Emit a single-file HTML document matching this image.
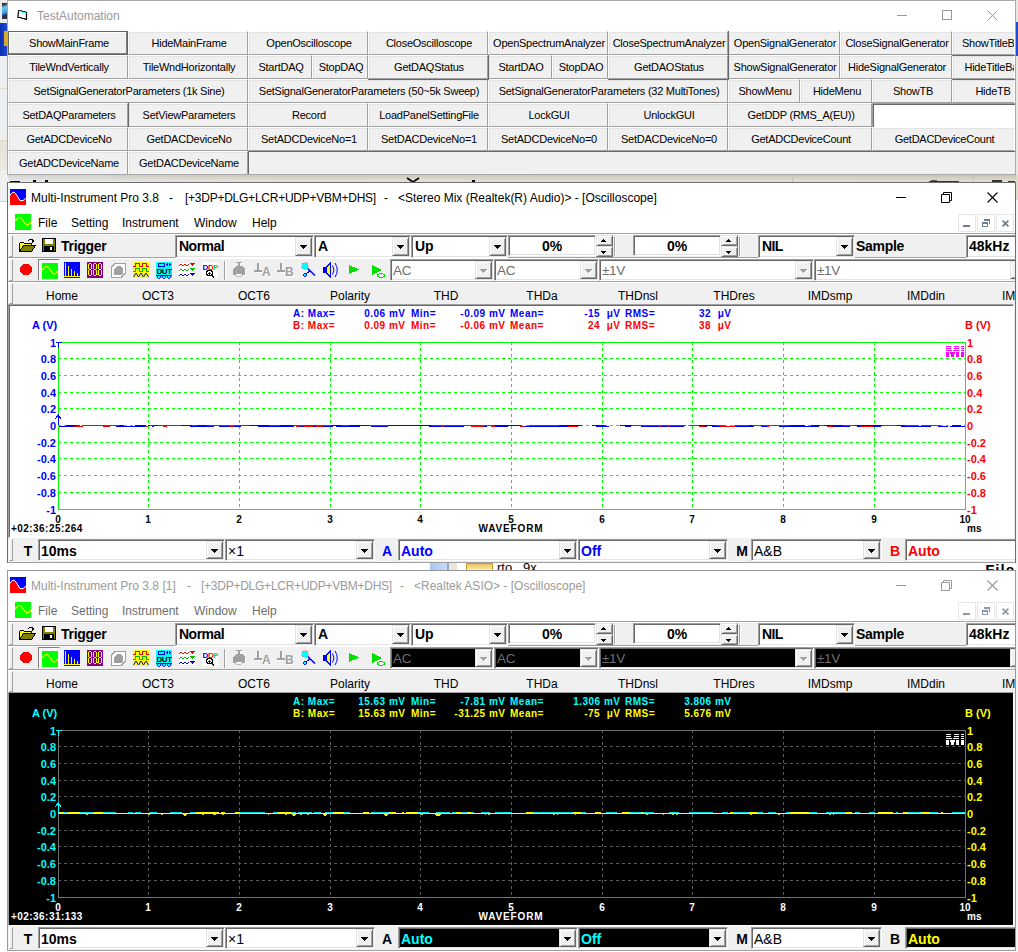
<!DOCTYPE html><html><head><meta charset="utf-8"><style>
*{margin:0;padding:0;box-sizing:border-box}
html,body{width:1018px;height:952px;overflow:hidden;background:#fff;position:relative;font-family:"Liberation Sans",sans-serif}
div{position:absolute}
.t{white-space:pre;overflow:hidden}
.btn{background:#f0f0f0;border-top:1px solid #fff;border-left:1px solid #fff;border-right:1px solid #a0a0a0;border-bottom:1px solid #a0a0a0;box-shadow:inset 1px 1px 0 #e3e3e3}
.bt{font-size:11px;letter-spacing:-0.25px;color:#000;text-align:center}
.sunk{border-top:1px solid #a0a0a0;border-left:1px solid #a0a0a0;border-right:1px solid #fff;border-bottom:1px solid #fff;box-shadow:inset 1px 1px 0 #696969, inset -1px -1px 0 #e3e3e3}
.dd{background:#f0f0f0;border-top:1px solid #e3e3e3;border-left:1px solid #e3e3e3;border-right:1px solid #696969;border-bottom:1px solid #696969;box-shadow:inset 1px 1px 0 #fff, inset -1px -1px 0 #a0a0a0}
svg{position:absolute;overflow:visible}
</style></head><body><div style="left:0px;top:0px;width:1018px;height:952px;background:#fff"></div>
<div style="left:0px;top:0px;width:8px;height:175px;background:#e9e9ea"></div>
<div style="left:2px;top:3px;width:5px;height:16px;background:linear-gradient(160deg,#2a2f3a 10%,#7cc7f0 30%,#3c9be6 60%,#2b3140 75%)"></div>
<div style="left:0px;top:23px;width:8px;height:33px;background:linear-gradient(90deg,#0a30b0,#1a4fd8)"></div>
<div style="left:4px;top:31px;width:4px;height:15px;background:#d8a830"></div>
<div style="left:0px;top:56px;width:8px;height:119px;background:#eceef0"></div>
<div style="left:0px;top:88px;width:7px;height:1px;background:#e0dccb"></div>
<div style="left:0px;top:140px;width:7px;height:1px;background:#dcd8c4"></div>
<div style="left:0px;top:141px;width:7px;height:30px;background:linear-gradient(#e4e2d8,#eceae2)"></div>
<div style="left:0px;top:175px;width:1018px;height:8px;background:linear-gradient(rgba(0,0,0,0.10),rgba(255,255,255,0.25)),linear-gradient(90deg,#ebebeb 0,#e2e0d4 200px,#dedbc9 100%)"></div>
<div style="left:0px;top:175px;width:8px;height:26px;background:#eef0f2"></div>
<div style="left:10px;top:181px;width:10px;height:1px;background:#000"></div>
<div style="left:33px;top:180px;width:3px;height:2px;background:#000"></div>
<div style="left:45px;top:180px;width:3px;height:2px;background:#000"></div>
<svg style="left:406px;top:178px" width="14" height="5"><path d="M1 0L7 4L13 0" fill="none" stroke="#000" stroke-width="1.6"/></svg>
<div style="left:472px;top:180px;width:3px;height:2px;background:#000"></div>
<div style="left:792px;top:176px;width:1px;height:6px;background:#c8c6b8"></div>
<div style="left:973px;top:176px;width:1px;height:6px;background:#c8c6b8"></div>
<div style="left:929px;top:181px;width:30px;height:1px;background:#333"></div>
<div style="left:931px;top:180px;width:6px;height:1px;background:#555"></div>
<div style="left:992px;top:180px;width:10px;height:2px;background:#333"></div>
<div style="left:1008px;top:181px;width:7px;height:1px;background:#333"></div>
<div style="left:0px;top:201px;width:8px;height:1px;background:#d0d0c8"></div>
<div style="left:1016px;top:0px;width:2px;height:952px;background:#e8e8e0"></div>
<div style="left:1016px;top:22px;width:2px;height:34px;background:#1a50d0"></div>
<div style="left:0px;top:562px;width:1018px;height:9px;background:#fff"></div>
<div style="left:430px;top:563px;width:17px;height:7px;background:linear-gradient(90deg,#a8c4f0,#c8dcf8)"></div>
<div style="left:447px;top:563px;width:2px;height:7px;background:#8aa8d8"></div>
<div style="left:449px;top:563px;width:8px;height:7px;background:#e8e6d8"></div>
<div style="left:466px;top:563px;width:27px;height:7px;background:linear-gradient(#e8c060,#fff0a0);border-top:1px solid #c89830;border-left:1px solid #c89830;border-right:1px solid #c89830"></div>
<div class="t" style="left:497px;top:561px;width:80px;height:14px;line-height:14px;font-size:13px;color:#000;overflow:hidden">rto&nbsp;&nbsp; 9x</div>
<div class="t" style="left:943px;top:561px;width:72px;height:14px;line-height:18px;font-size:15px;font-weight:bold;color:#000;letter-spacing:1px;text-align:right">File</div>
<div style="left:7px;top:0px;width:1009px;height:175px;background:#fff;border:1px solid #aaa"></div>
<svg style="left:17px;top:9px" width="12" height="12" viewBox="0 0 12 12"><path d="M1.5 1.5h2.5l1 1h3l1 1h0.5v7h-1l-1-1h-2.5l-1-1h-3z" fill="#fff" stroke="#000" stroke-width="1.2"/><path d="M1.5 2.2h2.5l1 1h3l1 1" stroke="#0ff" stroke-width="1" fill="none"/></svg>
<div class="t" style="left:37px;top:7px;width:200px;height:18px;line-height:18px;text-align:left;font-size:12px;color:#999">TestAutomation</div>
<div style="left:897px;top:15px;width:10px;height:1px;background:#999"></div>
<div style="left:942px;top:10px;width:10px;height:10px;border:1px solid #999"></div>
<svg style="left:987px;top:10px" width="11" height="11"><path d="M0.5 0.5L10.5 10.5M10.5 0.5L0.5 10.5" stroke="#999" stroke-width="1"/></svg>
<div style="left:8px;top:31px;width:1006px;height:143px;overflow:hidden">
<div class="btn" style="left:0px;top:0px;width:120px;height:24px"></div>
<div class="t bt" style="left:1px;top:0px;width:120px;height:24px;line-height:24px">ShowMainFrame</div>
<div class="btn" style="left:120px;top:0px;width:120px;height:24px"></div>
<div class="t bt" style="left:121px;top:0px;width:120px;height:24px;line-height:24px">HideMainFrame</div>
<div class="btn" style="left:240px;top:0px;width:120px;height:24px"></div>
<div class="t bt" style="left:241px;top:0px;width:120px;height:24px;line-height:24px">OpenOscilloscope</div>
<div class="btn" style="left:360px;top:0px;width:120px;height:24px"></div>
<div class="t bt" style="left:361px;top:0px;width:120px;height:24px;line-height:24px">CloseOscilloscope</div>
<div class="btn" style="left:480px;top:0px;width:120px;height:24px"></div>
<div class="t bt" style="left:481px;top:0px;width:120px;height:24px;line-height:24px">OpenSpectrumAnalyzer</div>
<div class="btn" style="left:600px;top:0px;width:120px;height:24px"></div>
<div class="t bt" style="left:601px;top:0px;width:120px;height:24px;line-height:24px">CloseSpectrumAnalyzer</div>
<div class="btn" style="left:720px;top:0px;width:112px;height:24px"></div>
<div class="t bt" style="left:721px;top:0px;width:112px;height:24px;line-height:24px">OpenSignalGenerator</div>
<div class="btn" style="left:832px;top:0px;width:112px;height:24px"></div>
<div class="t bt" style="left:833px;top:0px;width:112px;height:24px;line-height:24px">CloseSignalGenerator</div>
<div class="btn" style="left:944px;top:0px;width:80px;height:24px"></div>
<div class="t bt" style="left:945px;top:0px;width:80px;height:24px;line-height:24px">ShowTitleBar</div>
<div class="btn" style="left:0px;top:24px;width:120px;height:24px"></div>
<div class="t bt" style="left:1px;top:24px;width:120px;height:24px;line-height:24px">TileWndVertically</div>
<div class="btn" style="left:120px;top:24px;width:120px;height:24px"></div>
<div class="t bt" style="left:121px;top:24px;width:120px;height:24px;line-height:24px">TileWndHorizontally</div>
<div class="btn" style="left:240px;top:24px;width:64px;height:24px"></div>
<div class="t bt" style="left:241px;top:24px;width:64px;height:24px;line-height:24px">StartDAQ</div>
<div class="btn" style="left:304px;top:24px;width:56px;height:24px"></div>
<div class="t bt" style="left:305px;top:24px;width:56px;height:24px;line-height:24px">StopDAQ</div>
<div class="btn" style="left:360px;top:24px;width:120px;height:24px"></div>
<div class="t bt" style="left:361px;top:24px;width:120px;height:24px;line-height:24px">GetDAQStatus</div>
<div class="btn" style="left:480px;top:24px;width:64px;height:24px"></div>
<div class="t bt" style="left:481px;top:24px;width:64px;height:24px;line-height:24px">StartDAO</div>
<div class="btn" style="left:544px;top:24px;width:56px;height:24px"></div>
<div class="t bt" style="left:545px;top:24px;width:56px;height:24px;line-height:24px">StopDAO</div>
<div class="btn" style="left:600px;top:24px;width:120px;height:24px"></div>
<div class="t bt" style="left:601px;top:24px;width:120px;height:24px;line-height:24px">GetDAOStatus</div>
<div class="btn" style="left:720px;top:24px;width:112px;height:24px"></div>
<div class="t bt" style="left:721px;top:24px;width:112px;height:24px;line-height:24px">ShowSignalGenerator</div>
<div class="btn" style="left:832px;top:24px;width:112px;height:24px"></div>
<div class="t bt" style="left:833px;top:24px;width:112px;height:24px;line-height:24px">HideSignalGenerator</div>
<div class="btn" style="left:944px;top:24px;width:80px;height:24px"></div>
<div class="t bt" style="left:945px;top:24px;width:80px;height:24px;line-height:24px">HideTitleBar</div>
<div class="btn" style="left:0px;top:48px;width:240px;height:24px"></div>
<div class="t bt" style="left:1px;top:48px;width:240px;height:24px;line-height:24px">SetSignalGeneratorParameters (1k Sine)</div>
<div class="btn" style="left:240px;top:48px;width:240px;height:24px"></div>
<div class="t bt" style="left:241px;top:48px;width:240px;height:24px;line-height:24px">SetSignalGeneratorParameters (50~5k Sweep)</div>
<div class="btn" style="left:480px;top:48px;width:240px;height:24px"></div>
<div class="t bt" style="left:481px;top:48px;width:240px;height:24px;line-height:24px">SetSignalGeneratorParameters (32 MultiTones)</div>
<div class="btn" style="left:720px;top:48px;width:72px;height:24px"></div>
<div class="t bt" style="left:721px;top:48px;width:72px;height:24px;line-height:24px">ShowMenu</div>
<div class="btn" style="left:792px;top:48px;width:72px;height:24px"></div>
<div class="t bt" style="left:793px;top:48px;width:72px;height:24px;line-height:24px">HideMenu</div>
<div class="btn" style="left:864px;top:48px;width:80px;height:24px"></div>
<div class="t bt" style="left:865px;top:48px;width:80px;height:24px;line-height:24px">ShowTB</div>
<div class="btn" style="left:944px;top:48px;width:80px;height:24px"></div>
<div class="t bt" style="left:945px;top:48px;width:80px;height:24px;line-height:24px">HideTB</div>
<div class="btn" style="left:0px;top:72px;width:120px;height:24px"></div>
<div class="t bt" style="left:1px;top:72px;width:120px;height:24px;line-height:24px">SetDAQParameters</div>
<div class="btn" style="left:120px;top:72px;width:120px;height:24px"></div>
<div class="t bt" style="left:121px;top:72px;width:120px;height:24px;line-height:24px">SetViewParameters</div>
<div class="btn" style="left:240px;top:72px;width:120px;height:24px"></div>
<div class="t bt" style="left:241px;top:72px;width:120px;height:24px;line-height:24px">Record</div>
<div class="btn" style="left:360px;top:72px;width:120px;height:24px"></div>
<div class="t bt" style="left:361px;top:72px;width:120px;height:24px;line-height:24px">LoadPanelSettingFile</div>
<div class="btn" style="left:480px;top:72px;width:120px;height:24px"></div>
<div class="t bt" style="left:481px;top:72px;width:120px;height:24px;line-height:24px">LockGUI</div>
<div class="btn" style="left:600px;top:72px;width:120px;height:24px"></div>
<div class="t bt" style="left:601px;top:72px;width:120px;height:24px;line-height:24px">UnlockGUI</div>
<div class="btn" style="left:720px;top:72px;width:144px;height:24px"></div>
<div class="t bt" style="left:721px;top:72px;width:144px;height:24px;line-height:24px">GetDDP (RMS_A(EU))</div>
<div class="btn" style="left:0px;top:96px;width:120px;height:24px"></div>
<div class="t bt" style="left:1px;top:96px;width:120px;height:24px;line-height:24px">GetADCDeviceNo</div>
<div class="btn" style="left:120px;top:96px;width:120px;height:24px"></div>
<div class="t bt" style="left:121px;top:96px;width:120px;height:24px;line-height:24px">GetDACDeviceNo</div>
<div class="btn" style="left:240px;top:96px;width:120px;height:24px"></div>
<div class="t bt" style="left:241px;top:96px;width:120px;height:24px;line-height:24px">SetADCDeviceNo=1</div>
<div class="btn" style="left:360px;top:96px;width:120px;height:24px"></div>
<div class="t bt" style="left:361px;top:96px;width:120px;height:24px;line-height:24px">SetDACDeviceNo=1</div>
<div class="btn" style="left:480px;top:96px;width:120px;height:24px"></div>
<div class="t bt" style="left:481px;top:96px;width:120px;height:24px;line-height:24px">SetADCDeviceNo=0</div>
<div class="btn" style="left:600px;top:96px;width:120px;height:24px"></div>
<div class="t bt" style="left:601px;top:96px;width:120px;height:24px;line-height:24px">SetDACDeviceNo=0</div>
<div class="btn" style="left:720px;top:96px;width:144px;height:24px"></div>
<div class="t bt" style="left:721px;top:96px;width:144px;height:24px;line-height:24px">GetADCDeviceCount</div>
<div class="btn" style="left:864px;top:96px;width:143px;height:24px"></div>
<div class="t bt" style="left:865px;top:96px;width:143px;height:24px;line-height:24px">GetDACDeviceCount</div>
<div class="btn" style="left:0px;top:120px;width:120px;height:24px"></div>
<div class="t bt" style="left:1px;top:120px;width:120px;height:24px;line-height:24px">GetADCDeviceName</div>
<div class="btn" style="left:120px;top:120px;width:120px;height:24px"></div>
<div class="t bt" style="left:121px;top:120px;width:120px;height:24px;line-height:24px">GetDACDeviceName</div>
</div>
<div style="left:8px;top:31px;width:120px;height:24px;border:1px solid #646464;box-shadow:inset -1px -1px 0 #808080, inset 1px 1px 0 #fff"></div>
<div style="left:488px;top:55px;width:1px;height:25px;background:#696969"></div>
<div style="left:368px;top:79px;width:121px;height:1px;background:#696969"></div>
<div style="left:728px;top:31px;width:1px;height:49px;background:#696969"></div>
<div style="left:608px;top:79px;width:121px;height:1px;background:#696969"></div>
<div style="left:952px;top:55px;width:63px;height:1px;background:#696969"></div>
<div style="left:952px;top:79px;width:63px;height:1px;background:#696969"></div>
<div style="left:128px;top:103px;width:1px;height:24px;background:#696969"></div>
<div style="left:872px;top:103px;width:143px;height:24px;background:#fff;border-top:1px solid #a0a0a0;border-left:1px solid #a0a0a0;box-shadow:inset 1px 1px 0 #696969"></div>
<div style="left:248px;top:151px;width:767px;height:23px;background:#f0f0f0;border-top:1px solid #696969;border-left:1px solid #696969"></div>
<div style="left:7px;top:182px;width:1009px;height:381px;background:#f0f0f0;border:1px solid #6e6e6e"></div>
<div style="left:8px;top:183px;width:1007px;height:31px;background:#fff"></div>
<svg style="left:10px;top:189px" width="16" height="16" viewBox="0 0 16 16"><rect width="16" height="16" fill="#0000ff"/><path d="M0 16V6.5Q3 1 5.5 4.5T10 11.5Q13 13 16 9V16Z" fill="#ff0000"/><path d="M0 6.5Q3 1 5.5 4.5T10 11.5Q13 13 16 9" fill="none" stroke="#fff" stroke-width="1"/></svg>
<div class="t" style="left:31px;top:188px;width:200px;height:20px;line-height:20px;text-align:left;font-size:12px;color:#000">Multi-Instrument Pro 3.8</div>
<div class="t" style="left:169px;top:188px;width:10px;height:20px;line-height:20px;text-align:left;font-size:12px;color:#000">-</div>
<div class="t" style="left:185px;top:188px;width:200px;height:20px;line-height:20px;text-align:left;font-size:12px;letter-spacing:-0.25px;color:#000">[+3DP+DLG+LCR+UDP+VBM+DHS]</div>
<div class="t" style="left:384px;top:188px;width:10px;height:20px;line-height:20px;text-align:left;font-size:12px;color:#000">-</div>
<div class="t" style="left:398px;top:188px;width:300px;height:20px;line-height:20px;text-align:left;font-size:12px;color:#000">&lt;Stereo Mix (Realtek(R) Audio)&gt; - [Oscilloscope]</div>
<div style="left:896px;top:197px;width:10px;height:1px;background:#000"></div>
<svg style="left:941px;top:192px" width="11" height="11"><path d="M2.5 2.5V0.5H10.5V8.5H8.5M0.5 2.5H8.5V10.5H0.5Z" fill="none" stroke="#000" stroke-width="1"/></svg>
<svg style="left:987px;top:192px" width="11" height="11"><path d="M0.5 0.5L10.5 10.5M10.5 0.5L0.5 10.5" stroke="#000" stroke-width="1.1"/></svg>
<div style="left:8px;top:214px;width:1007px;height:19px;background:#fff"></div>
<svg style="left:15px;top:214px" width="16" height="16" viewBox="0 0 16 16"><rect width="16" height="16" fill="#00ff00"/><path d="M0 7L2 5L3.5 3.5H5.5L7 5L9 8L10.5 10L11.5 11H13L14.5 9.5L16 8" fill="none" stroke="#ffff00" stroke-width="1.1"/></svg>
<div class="t" style="left:38px;top:214px;width:80px;height:18px;line-height:18px;text-align:left;font-size:12px;color:#000">File</div>
<div class="t" style="left:71px;top:214px;width:80px;height:18px;line-height:18px;text-align:left;font-size:12px;color:#000">Setting</div>
<div class="t" style="left:122px;top:214px;width:80px;height:18px;line-height:18px;text-align:left;font-size:12px;color:#000">Instrument</div>
<div class="t" style="left:194px;top:214px;width:80px;height:18px;line-height:18px;text-align:left;font-size:12px;color:#000">Window</div>
<div class="t" style="left:252px;top:214px;width:80px;height:18px;line-height:18px;text-align:left;font-size:12px;color:#000">Help</div>
<div style="left:958px;top:214px;width:18px;height:18px;border:1px solid #e6e6e6;background:#fff"></div>
<div style="left:977px;top:214px;width:18px;height:18px;border:1px solid #e6e6e6;background:#fff"></div>
<div style="left:996px;top:214px;width:18px;height:18px;border:1px solid #e6e6e6;background:#fff"></div>
<div style="left:963px;top:225px;width:7px;height:2px;background:#6d7d8e"></div>
<div style="left:984px;top:219px;width:6px;height:2px;background:#6d7d8e"></div>
<div style="left:989px;top:219px;width:1px;height:5px;background:#6d7d8e"></div>
<div style="left:982px;top:222px;width:6px;height:2px;background:#6d7d8e"></div>
<div style="left:982px;top:222px;width:1px;height:5px;background:#6d7d8e"></div>
<div style="left:987px;top:222px;width:1px;height:5px;background:#6d7d8e"></div>
<div style="left:982px;top:226px;width:6px;height:1px;background:#6d7d8e"></div>
<svg style="left:1002px;top:220px" width="7" height="7"><path d="M0.6 0.6L6.4 6.4M6.4 0.6L0.6 6.4" stroke="#6d7d8e" stroke-width="1.7"/></svg>
<div style="left:8px;top:233px;width:1007px;height:1px;background:#a0a0a0"></div>
<div style="left:8px;top:234px;width:1007px;height:1px;background:#fff"></div>
<div style="left:9px;top:235px;width:4px;height:22px;border-left:1px solid #fff;border-top:1px solid #fff;border-right:1px solid #a0a0a0;border-bottom:1px solid #a0a0a0"></div>
<div style="left:8px;top:257px;width:1007px;height:1px;background:#a0a0a0"></div>
<div style="left:8px;top:258px;width:1007px;height:1px;background:#fff"></div>
<div class="t" style="left:61px;top:236px;width:60px;height:20px;line-height:20px;text-align:left;font-size:14px;font-weight:bold;letter-spacing:-0.3px">Trigger</div>
<div class="sunk" style="left:175px;top:235px;width:139px;height:23px;background:#fff"></div>
<div class="t" style="left:179px;top:236px;width:116px;height:21px;line-height:21px;text-align:left;font-size:14px;font-weight:bold;letter-spacing:-0.5px">Normal</div>
<div class="dd" style="left:295px;top:237px;width:17px;height:19px"></div>
<div style="left:300px;top:245px;width:7px;height:1px;background:#000"></div><div style="left:301px;top:246px;width:5px;height:1px;background:#000"></div><div style="left:302px;top:247px;width:3px;height:1px;background:#000"></div><div style="left:303px;top:248px;width:1px;height:1px;background:#000"></div>
<div class="sunk" style="left:314px;top:235px;width:97px;height:23px;background:#fff"></div>
<div class="t" style="left:318px;top:236px;width:74px;height:21px;line-height:21px;text-align:left;font-size:14px;font-weight:bold">A</div>
<div class="dd" style="left:392px;top:237px;width:17px;height:19px"></div>
<div style="left:397px;top:245px;width:7px;height:1px;background:#000"></div><div style="left:398px;top:246px;width:5px;height:1px;background:#000"></div><div style="left:399px;top:247px;width:3px;height:1px;background:#000"></div><div style="left:400px;top:248px;width:1px;height:1px;background:#000"></div>
<div class="sunk" style="left:411px;top:235px;width:97px;height:23px;background:#fff"></div>
<div class="t" style="left:415px;top:236px;width:74px;height:21px;line-height:21px;text-align:left;font-size:14px;font-weight:bold">Up</div>
<div class="dd" style="left:489px;top:237px;width:17px;height:19px"></div>
<div style="left:494px;top:245px;width:7px;height:1px;background:#000"></div><div style="left:495px;top:246px;width:5px;height:1px;background:#000"></div><div style="left:496px;top:247px;width:3px;height:1px;background:#000"></div><div style="left:497px;top:248px;width:1px;height:1px;background:#000"></div>
<div class="sunk" style="left:508px;top:235px;width:88px;height:21px;background:#fff"></div>
<div class="t" style="left:510px;top:236px;width:84px;height:20px;line-height:20px;text-align:center;font-size:14px;font-weight:bold">0%</div>
<div class="dd" style="left:596px;top:235px;width:17px;height:11px"></div>
<div class="dd" style="left:596px;top:246px;width:17px;height:11px"></div>
<div style="left:603px;top:239px;width:1px;height:1px;background:#000"></div><div style="left:602px;top:240px;width:3px;height:1px;background:#000"></div><div style="left:601px;top:241px;width:5px;height:1px;background:#000"></div>
<div style="left:601px;top:251px;width:5px;height:1px;background:#000"></div><div style="left:602px;top:252px;width:3px;height:1px;background:#000"></div><div style="left:603px;top:253px;width:1px;height:1px;background:#000"></div>
<div style="left:614px;top:237px;width:2px;height:19px;border-left:1px solid #a0a0a0;border-right:1px solid #fff"></div>
<div class="sunk" style="left:633px;top:235px;width:88px;height:21px;background:#fff"></div>
<div class="t" style="left:635px;top:236px;width:84px;height:20px;line-height:20px;text-align:center;font-size:14px;font-weight:bold">0%</div>
<div class="dd" style="left:721px;top:235px;width:17px;height:11px"></div>
<div class="dd" style="left:721px;top:246px;width:17px;height:11px"></div>
<div style="left:728px;top:239px;width:1px;height:1px;background:#000"></div><div style="left:727px;top:240px;width:3px;height:1px;background:#000"></div><div style="left:726px;top:241px;width:5px;height:1px;background:#000"></div>
<div style="left:726px;top:251px;width:5px;height:1px;background:#000"></div><div style="left:727px;top:252px;width:3px;height:1px;background:#000"></div><div style="left:728px;top:253px;width:1px;height:1px;background:#000"></div>
<div style="left:739px;top:237px;width:2px;height:19px;border-left:1px solid #a0a0a0;border-right:1px solid #fff"></div>
<div class="sunk" style="left:758px;top:235px;width:97px;height:23px;background:#fff"></div>
<div class="t" style="left:762px;top:236px;width:74px;height:21px;line-height:21px;text-align:left;font-size:14px;font-weight:bold;letter-spacing:-0.6px">NIL</div>
<div class="dd" style="left:836px;top:237px;width:17px;height:19px"></div>
<div style="left:841px;top:245px;width:7px;height:1px;background:#000"></div><div style="left:842px;top:246px;width:5px;height:1px;background:#000"></div><div style="left:843px;top:247px;width:3px;height:1px;background:#000"></div><div style="left:844px;top:248px;width:1px;height:1px;background:#000"></div>
<div class="t" style="left:856px;top:236px;width:60px;height:20px;line-height:20px;text-align:left;font-size:14px;font-weight:bold;letter-spacing:-0.3px">Sample</div>
<div class="sunk" style="left:966px;top:235px;width:54px;height:23px;background:#fff"></div>
<div class="t" style="left:969px;top:236px;width:47px;height:21px;line-height:21px;text-align:left;font-size:14px;font-weight:bold">48kHz</div>
<div style="left:9px;top:259px;width:4px;height:22px;border-left:1px solid #fff;border-top:1px solid #fff;border-right:1px solid #a0a0a0;border-bottom:1px solid #a0a0a0"></div>
<div style="left:8px;top:281px;width:1007px;height:1px;background:#a0a0a0"></div>
<div style="left:8px;top:282px;width:1007px;height:1px;background:#fff"></div>
<svg style="left:20px;top:264px" width="12" height="11" viewBox="0 0 12 11" shape-rendering="crispEdges"><path d="M3.5 0H8.5L12 3.5V7.5L8.5 11H3.5L0 7.5V3.5Z" fill="#ff0000"/></svg>
<div style="left:38px;top:259px;width:22px;height:22px;border-top:1px solid #808080;border-left:1px solid #808080;border-right:1px solid #fff;border-bottom:1px solid #fff;background:repeating-conic-gradient(#fff 0 25%,#f0f0f0 0 50%) 0 0/2px 2px"></div>
<svg style="left:42px;top:263px" width="16" height="16" viewBox="0 0 16 16" shape-rendering="crispEdges"><rect width="16" height="16" fill="#00ff00"/><path d="M0 7L2 5L3.5 3.5H5.5L7 5L9 8L10.5 10L11.5 11H13L14.5 9.5L16 8" fill="none" stroke="#ffff00" stroke-width="1.1" shape-rendering="auto"/></svg>
<svg style="left:64px;top:262px" width="16" height="16" viewBox="0 0 16 16" shape-rendering="crispEdges"><rect width="16" height="16" fill="#0000ff"/><path d="M1.5 1V14M4.5 4V14M7.5 7V14M10.5 9V14M13.5 11V14" stroke="#ffff00" stroke-width="1"/><rect x="0" y="14" width="16" height="1" fill="#ffff00"/></svg>
<svg style="left:87px;top:262px" width="16" height="16" viewBox="0 0 16 16" shape-rendering="crispEdges"><rect width="16" height="16" fill="#800080"/><g fill="#ffff00"><rect x="2" y="1" width="2" height="1"/><rect x="1" y="2" width="1" height="5"/><rect x="4" y="2" width="1" height="5"/><rect x="2" y="7" width="2" height="1"/><rect x="1" y="8" width="1" height="5"/><rect x="4" y="8" width="1" height="5"/><rect x="2" y="13" width="2" height="1"/><rect x="7" y="1" width="2" height="1"/><rect x="6" y="2" width="1" height="5"/><rect x="9" y="2" width="1" height="5"/><rect x="7" y="7" width="2" height="1"/><rect x="6" y="8" width="1" height="5"/><rect x="9" y="8" width="1" height="5"/><rect x="7" y="13" width="2" height="1"/><rect x="12" y="1" width="2" height="1"/><rect x="11" y="2" width="1" height="5"/><rect x="14" y="2" width="1" height="5"/><rect x="12" y="7" width="2" height="1"/><rect x="11" y="8" width="1" height="5"/><rect x="14" y="8" width="1" height="5"/><rect x="12" y="13" width="2" height="1"/><rect x="10" y="12" width="1" height="1"/></g></svg>
<svg style="left:111px;top:263px" width="15" height="15" viewBox="0 0 15 15" shape-rendering="crispEdges"><path d="M4 0.5H14.5V10L10 14.5H0.5V4Z" fill="#fff" stroke="#a0a0a0" stroke-width="1"/><path d="M6 3H9L12 6V10L10 12H3V6Z" fill="#a0a0a0"/></svg>
<svg style="left:133px;top:262px" width="16" height="16" viewBox="0 0 16 16" shape-rendering="crispEdges"><rect width="16" height="16" fill="#ffff00"/><path d="M0 4.5H2.5V1.5H6.5V4.5H9.5V1.5H13.5V4.5H16" fill="none" stroke="#ff0000"/><path d="M0 9.5H2.5V6.5H6.5V9.5H9.5V6.5H13.5V9.5H16" fill="none" stroke="#00c000"/><path d="M0.5 15L3 11L5.5 15L8 11L10.5 15L13 11L15.5 15" fill="none" stroke="#0000ff" shape-rendering="auto"/></svg>
<svg style="left:156px;top:262px" width="16" height="16" viewBox="0 0 16 16" shape-rendering="crispEdges"><rect width="16" height="16" fill="#00ffff"/><rect x="2" y="1" width="6" height="3" fill="none" stroke="#0000ff"/><path d="M10 2.5L12 1V4ZM15 2.5L13 1V4Z" fill="#0000ff"/><text x="8" y="11.5" font-family="Liberation Sans" font-weight="bold" font-size="8" text-anchor="middle" letter-spacing="-0.4" fill="#000">DUT</text><path d="M0 13.5H16" stroke="#0000ff"/><circle cx="3" cy="15" r="1.2" fill="none" stroke="#0000ff" stroke-width="0.8"/><circle cx="8" cy="15" r="1.2" fill="none" stroke="#0000ff" stroke-width="0.8"/><circle cx="13" cy="15" r="1.2" fill="none" stroke="#0000ff" stroke-width="0.8"/></svg>
<svg style="left:179px;top:263px" width="16" height="14" viewBox="0 0 16 14" shape-rendering="crispEdges"><rect width="16" height="14" fill="#fff"/><path d="M0 3L2 1L4 3L6 1L8 3L10 1" fill="none" stroke="#ff0000" shape-rendering="auto"/><path d="M10 0H16L13 3Z" fill="#ff0000"/><path d="M0 8L2 6L4 8L6 6L8 8L10 6" fill="none" stroke="#00c000" shape-rendering="auto"/><path d="M10 5H16L13 8Z" fill="#00c000"/><path d="M0 13L2 11L4 13L6 11L8 13L10 11" fill="none" stroke="#0000ff" shape-rendering="auto"/><path d="M10 10H16L13 13Z" fill="#0000ff"/></svg>
<svg style="left:202px;top:262px" width="16" height="16" viewBox="0 0 16 16" shape-rendering="crispEdges"><rect width="16" height="16" fill="#fff"/><text x="0.5" y="7.5" font-family="Liberation Sans" font-weight="bold" font-size="8" fill="#0000ff">D</text><text x="6" y="7.5" font-family="Liberation Sans" font-weight="bold" font-size="8" fill="#ff0000">D</text><text x="11" y="7.5" font-family="Liberation Sans" font-weight="bold" font-size="8" fill="#00e000">P</text><circle cx="7.5" cy="11" r="2.8" fill="none" stroke="#000" stroke-width="1.2"/><path d="M6 11H9M7.5 9.5V12.5" stroke="#000" stroke-width="0.8"/><path d="M9.5 13L12 15.5" stroke="#000" stroke-width="1.5"/></svg>
<div style="left:224px;top:261px;width:2px;height:19px;border-left:1px solid #a0a0a0;border-right:1px solid #fff"></div>
<svg style="left:233px;top:262px" width="14" height="17" viewBox="0 0 14 17" shape-rendering="crispEdges"><g transform="translate(1,1)" fill="#fff"><rect x="3" y="0" width="6" height="1"/><rect x="5" y="1" width="2" height="3"/><path d="M3 4H9L12 7V13Q6 15 0 13V7Z"/></g><g fill="#a0a0a0"><rect x="3" y="0" width="6" height="1"/><rect x="5" y="1" width="2" height="3"/><path d="M3 4H9L12 7V13Q6 15 0 13V7Z"/></g><ellipse cx="6" cy="13" rx="4" ry="1.5" fill="#fff" stroke="#a0a0a0" stroke-width="0.8" shape-rendering="auto"/></svg>
<svg style="left:254px;top:263px" width="18" height="14" viewBox="0 0 18 14" shape-rendering="crispEdges"><g fill="#fff" transform="translate(1,1)"><rect x="3" y="0" width="2" height="8"/><rect x="0" y="7" width="8" height="2"/><text x="8" y="12.5" font-family="Liberation Sans" font-weight="bold" font-size="12">A</text></g><g fill="#a0a0a0"><rect x="3" y="0" width="2" height="8"/><rect x="0" y="7" width="8" height="2"/><text x="8" y="12.5" font-family="Liberation Sans" font-weight="bold" font-size="12">A</text></g></svg>
<svg style="left:277px;top:263px" width="18" height="14" viewBox="0 0 18 14" shape-rendering="crispEdges"><g fill="#fff" transform="translate(1,1)"><rect x="3" y="0" width="2" height="8"/><rect x="0" y="7" width="8" height="2"/><text x="8" y="12.5" font-family="Liberation Sans" font-weight="bold" font-size="12">B</text></g><g fill="#a0a0a0"><rect x="3" y="0" width="2" height="8"/><rect x="0" y="7" width="8" height="2"/><text x="8" y="12.5" font-family="Liberation Sans" font-weight="bold" font-size="12">B</text></g></svg>
<svg style="left:301px;top:262px" width="16" height="15" viewBox="0 0 16 15" shape-rendering="crispEdges"><path d="M4 4L14 13.5" stroke="#0000ff" stroke-width="1.6" shape-rendering="auto"/><circle cx="4" cy="4" r="3.5" fill="#00ffff" stroke="#c08080" stroke-width="0.4"/><path d="M4.5 12L9 9" stroke="#0000ff" stroke-width="1.2"/><circle cx="4" cy="13" r="1.8" fill="#00ffff" stroke="#0000ff" stroke-width="0.9"/></svg>
<svg style="left:323px;top:262px" width="17" height="16" viewBox="0 0 17 16" shape-rendering="crispEdges"><rect x="0" y="5" width="3" height="6" fill="#0000ff"/><path d="M3.5 5L7.5 1V15L3.5 11Z" fill="#ffff00" stroke="#0000ff" stroke-width="1"/><path d="M9.5 3.5Q12.5 8 9.5 12.5M12 1Q16.5 8 12 15" fill="none" stroke="#0000ff" stroke-width="1" shape-rendering="auto"/></svg>
<svg style="left:349px;top:265px" width="10" height="10" viewBox="0 0 10 10" shape-rendering="crispEdges"><path d="M0 0L10 4.5L0 9Z" fill="#00e000"/></svg>
<svg style="left:372px;top:265px" width="13" height="13" viewBox="0 0 13 13" shape-rendering="crispEdges"><path d="M0 0L10 5L0 10Z" fill="#00e000"/><ellipse cx="9" cy="10.5" rx="3.3" ry="1.8" fill="none" stroke="#00e000" stroke-width="1"/></svg>
<div class="sunk" style="left:390px;top:259px;width:104px;height:22px;background:#fff"></div>
<div class="t" style="left:393px;top:261px;width:81px;height:20px;line-height:20px;text-align:left;font-size:13.5px;color:#6d6d6d;letter-spacing:-0.3px">AC</div>
<div class="dd" style="left:475px;top:261px;width:17px;height:18px"></div>
<div style="left:481px;top:270px;width:7px;height:1px;background:#fff"></div><div style="left:482px;top:271px;width:5px;height:1px;background:#fff"></div><div style="left:483px;top:272px;width:3px;height:1px;background:#fff"></div><div style="left:484px;top:273px;width:1px;height:1px;background:#fff"></div><div style="left:480px;top:269px;width:7px;height:1px;background:#a0a0a0"></div><div style="left:481px;top:270px;width:5px;height:1px;background:#a0a0a0"></div><div style="left:482px;top:271px;width:3px;height:1px;background:#a0a0a0"></div><div style="left:483px;top:272px;width:1px;height:1px;background:#a0a0a0"></div>
<div class="sunk" style="left:494px;top:259px;width:105px;height:22px;background:#fff"></div>
<div class="t" style="left:497px;top:261px;width:82px;height:20px;line-height:20px;text-align:left;font-size:13.5px;color:#6d6d6d;letter-spacing:-0.3px">AC</div>
<div class="dd" style="left:580px;top:261px;width:17px;height:18px"></div>
<div style="left:586px;top:270px;width:7px;height:1px;background:#fff"></div><div style="left:587px;top:271px;width:5px;height:1px;background:#fff"></div><div style="left:588px;top:272px;width:3px;height:1px;background:#fff"></div><div style="left:589px;top:273px;width:1px;height:1px;background:#fff"></div><div style="left:585px;top:269px;width:7px;height:1px;background:#a0a0a0"></div><div style="left:586px;top:270px;width:5px;height:1px;background:#a0a0a0"></div><div style="left:587px;top:271px;width:3px;height:1px;background:#a0a0a0"></div><div style="left:588px;top:272px;width:1px;height:1px;background:#a0a0a0"></div>
<div class="sunk" style="left:599px;top:259px;width:215px;height:22px;background:#fff"></div>
<div class="t" style="left:602px;top:261px;width:192px;height:20px;line-height:20px;text-align:left;font-size:13.5px;color:#6d6d6d;letter-spacing:-0.3px">±1V</div>
<div class="dd" style="left:795px;top:261px;width:17px;height:18px"></div>
<div style="left:801px;top:270px;width:7px;height:1px;background:#fff"></div><div style="left:802px;top:271px;width:5px;height:1px;background:#fff"></div><div style="left:803px;top:272px;width:3px;height:1px;background:#fff"></div><div style="left:804px;top:273px;width:1px;height:1px;background:#fff"></div><div style="left:800px;top:269px;width:7px;height:1px;background:#a0a0a0"></div><div style="left:801px;top:270px;width:5px;height:1px;background:#a0a0a0"></div><div style="left:802px;top:271px;width:3px;height:1px;background:#a0a0a0"></div><div style="left:803px;top:272px;width:1px;height:1px;background:#a0a0a0"></div>
<div class="sunk" style="left:814px;top:259px;width:215px;height:22px;background:#fff"></div>
<div class="t" style="left:817px;top:261px;width:192px;height:20px;line-height:20px;text-align:left;font-size:13.5px;color:#6d6d6d;letter-spacing:-0.3px">±1V</div>
<div class="dd" style="left:1010px;top:261px;width:17px;height:18px"></div>
<div style="left:1016px;top:270px;width:7px;height:1px;background:#fff"></div><div style="left:1017px;top:271px;width:5px;height:1px;background:#fff"></div><div style="left:1018px;top:272px;width:3px;height:1px;background:#fff"></div><div style="left:1019px;top:273px;width:1px;height:1px;background:#fff"></div><div style="left:1015px;top:269px;width:7px;height:1px;background:#a0a0a0"></div><div style="left:1016px;top:270px;width:5px;height:1px;background:#a0a0a0"></div><div style="left:1017px;top:271px;width:3px;height:1px;background:#a0a0a0"></div><div style="left:1018px;top:272px;width:1px;height:1px;background:#a0a0a0"></div>
<div style="left:9px;top:283px;width:4px;height:21px;border-left:1px solid #fff;border-top:1px solid #fff;border-right:1px solid #a0a0a0;border-bottom:1px solid #a0a0a0"></div>
<div class="t" style="left:14px;top:287px;width:96px;height:18px;line-height:18px;text-align:center;font-size:12px;color:#000">Home</div>
<div class="t" style="left:110px;top:287px;width:96px;height:18px;line-height:18px;text-align:center;font-size:12px;color:#000">OCT3</div>
<div class="t" style="left:206px;top:287px;width:96px;height:18px;line-height:18px;text-align:center;font-size:12px;color:#000">OCT6</div>
<div class="t" style="left:302px;top:287px;width:96px;height:18px;line-height:18px;text-align:center;font-size:12px;color:#000">Polarity</div>
<div class="t" style="left:398px;top:287px;width:96px;height:18px;line-height:18px;text-align:center;font-size:12px;color:#000">THD</div>
<div class="t" style="left:494px;top:287px;width:96px;height:18px;line-height:18px;text-align:center;font-size:12px;color:#000">THDa</div>
<div class="t" style="left:590px;top:287px;width:96px;height:18px;line-height:18px;text-align:center;font-size:12px;color:#000">THDnsl</div>
<div class="t" style="left:686px;top:287px;width:96px;height:18px;line-height:18px;text-align:center;font-size:12px;color:#000">THDres</div>
<div class="t" style="left:782px;top:287px;width:96px;height:18px;line-height:18px;text-align:center;font-size:12px;color:#000">IMDsmp</div>
<div class="t" style="left:878px;top:287px;width:96px;height:18px;line-height:18px;text-align:center;font-size:12px;color:#000">IMDdin</div>
<div class="t" style="left:974px;top:287px;width:96px;height:18px;line-height:18px;text-align:center;font-size:12px;color:#000">IMDxxx</div>
<div style="left:8px;top:304px;width:1006px;height:234px;background:#fff;border-top:1px solid #a0a0a0;border-left:1px solid #a0a0a0;border-right:1px solid #fff;border-bottom:1px solid #fff;box-shadow:inset 1px 1px 0 #696969"></div>
<svg style="left:0;top:0" width="1018" height="952" shape-rendering="crispEdges"><path d="M58 358.5H965" stroke="#00ff00" stroke-width="1" stroke-dasharray="3 3"/><path d="M58 375.5H965" stroke="#00ff00" stroke-width="1" stroke-dasharray="3 3"/><path d="M58 392.5H965" stroke="#00ff00" stroke-width="1" stroke-dasharray="3 3"/><path d="M58 408.5H965" stroke="#00ff00" stroke-width="1" stroke-dasharray="3 3"/><path d="M58 425.5H965" stroke="#00ff00" stroke-width="1" stroke-dasharray="3 3"/><path d="M58 442.5H965" stroke="#00ff00" stroke-width="1" stroke-dasharray="3 3"/><path d="M58 458.5H965" stroke="#00ff00" stroke-width="1" stroke-dasharray="3 3"/><path d="M58 475.5H965" stroke="#00ff00" stroke-width="1" stroke-dasharray="3 3"/><path d="M58 492.5H965" stroke="#00ff00" stroke-width="1" stroke-dasharray="3 3"/><path d="M148.5 342V509" stroke="#00ff00" stroke-width="1" stroke-dasharray="3 3"/><path d="M239.5 342V509" stroke="#00ff00" stroke-width="1" stroke-dasharray="3 3"/><path d="M330.5 342V509" stroke="#00ff00" stroke-width="1" stroke-dasharray="3 3"/><path d="M420.5 342V509" stroke="#00ff00" stroke-width="1" stroke-dasharray="3 3"/><path d="M511.5 342V509" stroke="#00ff00" stroke-width="1" stroke-dasharray="3 3"/><path d="M602.5 342V509" stroke="#00ff00" stroke-width="1" stroke-dasharray="3 3"/><path d="M692.5 342V509" stroke="#00ff00" stroke-width="1" stroke-dasharray="3 3"/><path d="M783.5 342V509" stroke="#00ff00" stroke-width="1" stroke-dasharray="3 3"/><path d="M874.5 342V509" stroke="#00ff00" stroke-width="1" stroke-dasharray="3 3"/><rect x="58.5" y="342.5" width="907" height="167" fill="none" stroke="#00ff00" stroke-width="1"/><path d="M56 342.5H62M58.5 342V348" stroke="#0000ff" stroke-width="1"/></svg>
<svg style="left:0;top:0" width="1018" height="952" shape-rendering="crispEdges"><rect x="66" y="425" width="8" height="1" fill="#0000ff"/><rect x="74" y="425" width="3" height="1" fill="#0000ff"/><rect x="77" y="425" width="3" height="1" fill="#ff0000"/><rect x="82" y="425" width="5" height="1" fill="#ff0000"/><rect x="87" y="425" width="8" height="1" fill="#ff0000"/><rect x="95" y="425" width="5" height="1" fill="#ff0000"/><rect x="100" y="425" width="8" height="1" fill="#ff0000"/><rect x="108" y="425" width="11" height="1" fill="#ff0000"/><rect x="119" y="425" width="5" height="1" fill="#0000ff"/><rect x="135" y="425" width="11" height="1" fill="#0000ff"/><rect x="148" y="425" width="2" height="1" fill="#0000ff"/><rect x="150" y="425" width="4" height="1" fill="#ff0000"/><rect x="154" y="425" width="4" height="1" fill="#0000ff"/><rect x="158" y="425" width="11" height="1" fill="#ff0000"/><rect x="169" y="425" width="12" height="1" fill="#ff0000"/><rect x="181" y="425" width="11" height="1" fill="#0000ff"/><rect x="192" y="425" width="5" height="1" fill="#ff0000"/><rect x="197" y="425" width="10" height="1" fill="#0000ff"/><rect x="207" y="425" width="11" height="1" fill="#ff0000"/><rect x="218" y="425" width="5" height="1" fill="#ff0000"/><rect x="223" y="425" width="10" height="1" fill="#ff0000"/><rect x="233" y="425" width="7" height="1" fill="#ff0000"/><rect x="240" y="425" width="9" height="1" fill="#ff0000"/><rect x="249" y="425" width="5" height="1" fill="#0000ff"/><rect x="254" y="425" width="13" height="1" fill="#0000ff"/><rect x="267" y="425" width="3" height="1" fill="#0000ff"/><rect x="270" y="425" width="10" height="1" fill="#ff0000"/><rect x="280" y="425" width="7" height="1" fill="#0000ff"/><rect x="287" y="425" width="6" height="1" fill="#0000ff"/><rect x="293" y="425" width="3" height="1" fill="#ff0000"/><rect x="296" y="425" width="8" height="1" fill="#ff0000"/><rect x="304" y="425" width="7" height="1" fill="#ff0000"/><rect x="311" y="425" width="9" height="1" fill="#ff0000"/><rect x="320" y="425" width="12" height="1" fill="#ff0000"/><rect x="332" y="425" width="10" height="1" fill="#0000ff"/><rect x="342" y="425" width="7" height="1" fill="#ff0000"/><rect x="349" y="425" width="7" height="1" fill="#0000ff"/><rect x="356" y="425" width="11" height="1" fill="#0000ff"/><rect x="367" y="425" width="3" height="1" fill="#0000ff"/><rect x="370" y="425" width="6" height="1" fill="#ff0000"/><rect x="376" y="425" width="12" height="1" fill="#ff0000"/><rect x="388" y="425" width="13" height="1" fill="#0000ff"/><rect x="401" y="425" width="12" height="1" fill="#0000ff"/><rect x="413" y="425" width="12" height="1" fill="#0000ff"/><rect x="425" y="425" width="6" height="1" fill="#0000ff"/><rect x="431" y="425" width="12" height="1" fill="#ff0000"/><rect x="443" y="425" width="9" height="1" fill="#ff0000"/><rect x="452" y="425" width="11" height="1" fill="#ff0000"/><rect x="463" y="425" width="2" height="1" fill="#ff0000"/><rect x="465" y="425" width="6" height="1" fill="#ff0000"/><rect x="471" y="425" width="5" height="1" fill="#ff0000"/><rect x="476" y="425" width="9" height="1" fill="#ff0000"/><rect x="485" y="425" width="9" height="1" fill="#ff0000"/><rect x="494" y="425" width="6" height="1" fill="#0000ff"/><rect x="500" y="425" width="8" height="1" fill="#0000ff"/><rect x="508" y="425" width="6" height="1" fill="#0000ff"/><rect x="514" y="425" width="7" height="1" fill="#0000ff"/><rect x="529" y="425" width="4" height="1" fill="#ff0000"/><rect x="533" y="425" width="4" height="1" fill="#ff0000"/><rect x="537" y="425" width="5" height="1" fill="#ff0000"/><rect x="542" y="425" width="11" height="1" fill="#ff0000"/><rect x="553" y="425" width="6" height="1" fill="#ff0000"/><rect x="559" y="425" width="8" height="1" fill="#0000ff"/><rect x="567" y="425" width="11" height="1" fill="#0000ff"/><rect x="578" y="425" width="4" height="1" fill="#0000ff"/><rect x="592" y="425" width="12" height="1" fill="#0000ff"/><rect x="604" y="425" width="2" height="1" fill="#ff0000"/><rect x="620" y="425" width="12" height="1" fill="#0000ff"/><rect x="632" y="425" width="8" height="1" fill="#ff0000"/><rect x="640" y="425" width="8" height="1" fill="#ff0000"/><rect x="648" y="425" width="12" height="1" fill="#ff0000"/><rect x="660" y="425" width="5" height="1" fill="#ff0000"/><rect x="665" y="425" width="5" height="1" fill="#ff0000"/><rect x="670" y="425" width="3" height="1" fill="#ff0000"/><rect x="673" y="425" width="2" height="1" fill="#ff0000"/><rect x="675" y="425" width="11" height="1" fill="#ff0000"/><rect x="689" y="425" width="11" height="1" fill="#ff0000"/><rect x="700" y="425" width="5" height="1" fill="#0000ff"/><rect x="705" y="425" width="4" height="1" fill="#0000ff"/><rect x="709" y="425" width="7" height="1" fill="#0000ff"/><rect x="716" y="425" width="9" height="1" fill="#ff0000"/><rect x="734" y="425" width="9" height="1" fill="#ff0000"/><rect x="743" y="425" width="6" height="1" fill="#ff0000"/><rect x="749" y="425" width="3" height="1" fill="#0000ff"/><rect x="752" y="425" width="13" height="1" fill="#ff0000"/><rect x="765" y="425" width="13" height="1" fill="#ff0000"/><rect x="778" y="425" width="2" height="1" fill="#ff0000"/><rect x="780" y="425" width="10" height="1" fill="#ff0000"/><rect x="790" y="425" width="13" height="1" fill="#0000ff"/><rect x="803" y="425" width="2" height="1" fill="#0000ff"/><rect x="811" y="425" width="3" height="1" fill="#0000ff"/><rect x="814" y="425" width="6" height="1" fill="#0000ff"/><rect x="820" y="425" width="4" height="1" fill="#ff0000"/><rect x="824" y="425" width="5" height="1" fill="#0000ff"/><rect x="829" y="425" width="14" height="1" fill="#0000ff"/><rect x="843" y="425" width="12" height="1" fill="#ff0000"/><rect x="855" y="425" width="14" height="1" fill="#0000ff"/><rect x="869" y="425" width="14" height="1" fill="#0000ff"/><rect x="883" y="425" width="14" height="1" fill="#ff0000"/><rect x="897" y="425" width="8" height="1" fill="#0000ff"/><rect x="905" y="425" width="5" height="1" fill="#ff0000"/><rect x="910" y="425" width="9" height="1" fill="#ff0000"/><rect x="921" y="425" width="14" height="1" fill="#ff0000"/><rect x="935" y="425" width="6" height="1" fill="#ff0000"/><rect x="952" y="425" width="9" height="1" fill="#0000ff"/><rect x="59" y="426" width="7" height="1" fill="#0000ff"/><rect x="66" y="426" width="3" height="1" fill="#0000ff"/><rect x="69" y="426" width="5" height="1" fill="#0000ff"/><rect x="74" y="426" width="9" height="1" fill="#ff0000"/><rect x="103" y="426" width="7" height="1" fill="#ff0000"/><rect x="116" y="426" width="5" height="1" fill="#0000ff"/><rect x="121" y="426" width="4" height="1" fill="#0000ff"/><rect x="125" y="426" width="12" height="1" fill="#0000ff"/><rect x="137" y="426" width="8" height="1" fill="#0000ff"/><rect x="145" y="426" width="3" height="1" fill="#ff0000"/><rect x="152" y="426" width="2" height="1" fill="#0000ff"/><rect x="163" y="426" width="4" height="1" fill="#ff0000"/><rect x="190" y="426" width="4" height="1" fill="#0000ff"/><rect x="194" y="426" width="4" height="1" fill="#0000ff"/><rect x="198" y="426" width="12" height="1" fill="#0000ff"/><rect x="210" y="426" width="4" height="1" fill="#0000ff"/><rect x="219" y="426" width="5" height="1" fill="#0000ff"/><rect x="224" y="426" width="5" height="1" fill="#0000ff"/><rect x="229" y="426" width="5" height="1" fill="#ff0000"/><rect x="234" y="426" width="7" height="1" fill="#0000ff"/><rect x="258" y="426" width="12" height="1" fill="#0000ff"/><rect x="270" y="426" width="10" height="1" fill="#0000ff"/><rect x="280" y="426" width="10" height="1" fill="#0000ff"/><rect x="290" y="426" width="4" height="1" fill="#0000ff"/><rect x="296" y="426" width="4" height="1" fill="#ff0000"/><rect x="300" y="426" width="4" height="1" fill="#0000ff"/><rect x="304" y="426" width="9" height="1" fill="#ff0000"/><rect x="313" y="426" width="3" height="1" fill="#0000ff"/><rect x="316" y="426" width="7" height="1" fill="#ff0000"/><rect x="323" y="426" width="10" height="1" fill="#0000ff"/><rect x="336" y="426" width="2" height="1" fill="#0000ff"/><rect x="338" y="426" width="6" height="1" fill="#0000ff"/><rect x="344" y="426" width="3" height="1" fill="#0000ff"/><rect x="347" y="426" width="10" height="1" fill="#0000ff"/><rect x="357" y="426" width="3" height="1" fill="#0000ff"/><rect x="371" y="426" width="11" height="1" fill="#0000ff"/><rect x="382" y="426" width="6" height="1" fill="#0000ff"/><rect x="429" y="426" width="4" height="1" fill="#0000ff"/><rect x="433" y="426" width="8" height="1" fill="#0000ff"/><rect x="441" y="426" width="3" height="1" fill="#ff0000"/><rect x="444" y="426" width="8" height="1" fill="#0000ff"/><rect x="452" y="426" width="12" height="1" fill="#0000ff"/><rect x="471" y="426" width="12" height="1" fill="#ff0000"/><rect x="483" y="426" width="4" height="1" fill="#0000ff"/><rect x="491" y="426" width="5" height="1" fill="#ff0000"/><rect x="496" y="426" width="3" height="1" fill="#0000ff"/><rect x="499" y="426" width="9" height="1" fill="#0000ff"/><rect x="520" y="426" width="4" height="1" fill="#ff0000"/><rect x="524" y="426" width="10" height="1" fill="#0000ff"/><rect x="534" y="426" width="8" height="1" fill="#0000ff"/><rect x="542" y="426" width="7" height="1" fill="#0000ff"/><rect x="549" y="426" width="7" height="1" fill="#0000ff"/><rect x="556" y="426" width="10" height="1" fill="#0000ff"/><rect x="566" y="426" width="2" height="1" fill="#0000ff"/><rect x="568" y="426" width="10" height="1" fill="#ff0000"/><rect x="596" y="426" width="3" height="1" fill="#0000ff"/><rect x="599" y="426" width="6" height="1" fill="#0000ff"/><rect x="605" y="426" width="4" height="1" fill="#0000ff"/><rect x="625" y="426" width="6" height="1" fill="#0000ff"/><rect x="641" y="426" width="11" height="1" fill="#0000ff"/><rect x="652" y="426" width="7" height="1" fill="#0000ff"/><rect x="659" y="426" width="2" height="1" fill="#ff0000"/><rect x="661" y="426" width="4" height="1" fill="#0000ff"/><rect x="665" y="426" width="3" height="1" fill="#0000ff"/><rect x="668" y="426" width="2" height="1" fill="#ff0000"/><rect x="670" y="426" width="6" height="1" fill="#0000ff"/><rect x="676" y="426" width="5" height="1" fill="#0000ff"/><rect x="681" y="426" width="3" height="1" fill="#0000ff"/><rect x="699" y="426" width="6" height="1" fill="#ff0000"/><rect x="705" y="426" width="2" height="1" fill="#0000ff"/><rect x="712" y="426" width="4" height="1" fill="#0000ff"/><rect x="716" y="426" width="4" height="1" fill="#0000ff"/><rect x="720" y="426" width="6" height="1" fill="#ff0000"/><rect x="726" y="426" width="10" height="1" fill="#ff0000"/><rect x="736" y="426" width="6" height="1" fill="#0000ff"/><rect x="742" y="426" width="12" height="1" fill="#0000ff"/><rect x="761" y="426" width="6" height="1" fill="#0000ff"/><rect x="767" y="426" width="2" height="1" fill="#ff0000"/><rect x="779" y="426" width="10" height="1" fill="#0000ff"/><rect x="789" y="426" width="9" height="1" fill="#0000ff"/><rect x="798" y="426" width="12" height="1" fill="#0000ff"/><rect x="810" y="426" width="9" height="1" fill="#0000ff"/><rect x="827" y="426" width="6" height="1" fill="#ff0000"/><rect x="833" y="426" width="5" height="1" fill="#0000ff"/><rect x="838" y="426" width="12" height="1" fill="#0000ff"/><rect x="857" y="426" width="4" height="1" fill="#0000ff"/><rect x="861" y="426" width="12" height="1" fill="#ff0000"/><rect x="873" y="426" width="6" height="1" fill="#0000ff"/><rect x="879" y="426" width="2" height="1" fill="#0000ff"/><rect x="901" y="426" width="11" height="1" fill="#0000ff"/><rect x="912" y="426" width="6" height="1" fill="#0000ff"/><rect x="918" y="426" width="4" height="1" fill="#0000ff"/><rect x="922" y="426" width="9" height="1" fill="#0000ff"/><rect x="938" y="426" width="10" height="1" fill="#0000ff"/><rect x="950" y="426" width="6" height="1" fill="#0000ff"/><rect x="956" y="426" width="4" height="1" fill="#0000ff"/><rect x="960" y="426" width="5" height="1" fill="#0000ff"/><path d="M58.5 425V415M55 419L58.5 415L61 419" fill="none" stroke="#0000ff" stroke-width="1"/></svg>
<div class="t" style="left:9px;top:336px;width:47px;height:14px;line-height:14px;text-align:right;font-size:11px;font-weight:bold;color:#0000ff">1</div>
<div class="t" style="left:967px;top:336px;width:47px;height:14px;line-height:14px;text-align:left;font-size:11px;font-weight:bold;color:#ff0000">1</div>
<div class="t" style="left:9px;top:352px;width:47px;height:14px;line-height:14px;text-align:right;font-size:11px;font-weight:bold;color:#0000ff">0.8</div>
<div class="t" style="left:967px;top:352px;width:47px;height:14px;line-height:14px;text-align:left;font-size:11px;font-weight:bold;color:#ff0000">0.8</div>
<div class="t" style="left:9px;top:369px;width:47px;height:14px;line-height:14px;text-align:right;font-size:11px;font-weight:bold;color:#0000ff">0.6</div>
<div class="t" style="left:967px;top:369px;width:47px;height:14px;line-height:14px;text-align:left;font-size:11px;font-weight:bold;color:#ff0000">0.6</div>
<div class="t" style="left:9px;top:386px;width:47px;height:14px;line-height:14px;text-align:right;font-size:11px;font-weight:bold;color:#0000ff">0.4</div>
<div class="t" style="left:967px;top:386px;width:47px;height:14px;line-height:14px;text-align:left;font-size:11px;font-weight:bold;color:#ff0000">0.4</div>
<div class="t" style="left:9px;top:402px;width:47px;height:14px;line-height:14px;text-align:right;font-size:11px;font-weight:bold;color:#0000ff">0.2</div>
<div class="t" style="left:967px;top:402px;width:47px;height:14px;line-height:14px;text-align:left;font-size:11px;font-weight:bold;color:#ff0000">0.2</div>
<div class="t" style="left:9px;top:419px;width:47px;height:14px;line-height:14px;text-align:right;font-size:11px;font-weight:bold;color:#0000ff">0</div>
<div class="t" style="left:967px;top:419px;width:47px;height:14px;line-height:14px;text-align:left;font-size:11px;font-weight:bold;color:#ff0000">0</div>
<div class="t" style="left:9px;top:436px;width:47px;height:14px;line-height:14px;text-align:right;font-size:11px;font-weight:bold;color:#0000ff">-0.2</div>
<div class="t" style="left:967px;top:436px;width:47px;height:14px;line-height:14px;text-align:left;font-size:11px;font-weight:bold;color:#ff0000">-0.2</div>
<div class="t" style="left:9px;top:452px;width:47px;height:14px;line-height:14px;text-align:right;font-size:11px;font-weight:bold;color:#0000ff">-0.4</div>
<div class="t" style="left:967px;top:452px;width:47px;height:14px;line-height:14px;text-align:left;font-size:11px;font-weight:bold;color:#ff0000">-0.4</div>
<div class="t" style="left:9px;top:469px;width:47px;height:14px;line-height:14px;text-align:right;font-size:11px;font-weight:bold;color:#0000ff">-0.6</div>
<div class="t" style="left:967px;top:469px;width:47px;height:14px;line-height:14px;text-align:left;font-size:11px;font-weight:bold;color:#ff0000">-0.6</div>
<div class="t" style="left:9px;top:486px;width:47px;height:14px;line-height:14px;text-align:right;font-size:11px;font-weight:bold;color:#0000ff">-0.8</div>
<div class="t" style="left:967px;top:486px;width:47px;height:14px;line-height:14px;text-align:left;font-size:11px;font-weight:bold;color:#ff0000">-0.8</div>
<div class="t" style="left:9px;top:503px;width:47px;height:14px;line-height:14px;text-align:right;font-size:11px;font-weight:bold;color:#0000ff">-1</div>
<div class="t" style="left:967px;top:503px;width:47px;height:14px;line-height:14px;text-align:left;font-size:11px;font-weight:bold;color:#ff0000">-1</div>
<div class="t" style="left:32px;top:318px;width:60px;height:14px;line-height:14px;text-align:left;font-size:11px;font-weight:bold;color:#0000ff">A (V)</div>
<div class="t" style="left:965px;top:318px;width:60px;height:14px;line-height:14px;text-align:left;font-size:11px;font-weight:bold;color:#ff0000">B (V)</div>
<svg style="left:946px;top:346px" width="19" height="11" fill="#ff00ff" shape-rendering="crispEdges"><rect x="0" y="0" width="5" height="1"/><rect x="8" y="0" width="5" height="1"/><rect x="15" y="0" width="3" height="1"/><rect x="0" y="2" width="5" height="1"/><rect x="8" y="2" width="5" height="1"/><rect x="15" y="2" width="3" height="1"/><rect x="0" y="4" width="6" height="1"/><rect x="7" y="4" width="6" height="1"/><rect x="15" y="4" width="3" height="1"/><rect x="0" y="6" width="3" height="5"/><rect x="4" y="6" width="5" height="2"/><rect x="5" y="8" width="3" height="3"/><rect x="10" y="6" width="3" height="5"/><rect x="15" y="6" width="3" height="5"/></svg>
<div class="t" style="left:43px;top:513px;width:30px;height:14px;line-height:14px;text-align:center;font-size:10px;font-weight:bold;color:#000000">0</div>
<div class="t" style="left:133px;top:513px;width:30px;height:14px;line-height:14px;text-align:center;font-size:10px;font-weight:bold;color:#000000">1</div>
<div class="t" style="left:224px;top:513px;width:30px;height:14px;line-height:14px;text-align:center;font-size:10px;font-weight:bold;color:#000000">2</div>
<div class="t" style="left:315px;top:513px;width:30px;height:14px;line-height:14px;text-align:center;font-size:10px;font-weight:bold;color:#000000">3</div>
<div class="t" style="left:405px;top:513px;width:30px;height:14px;line-height:14px;text-align:center;font-size:10px;font-weight:bold;color:#000000">4</div>
<div class="t" style="left:496px;top:513px;width:30px;height:14px;line-height:14px;text-align:center;font-size:10px;font-weight:bold;color:#000000">5</div>
<div class="t" style="left:587px;top:513px;width:30px;height:14px;line-height:14px;text-align:center;font-size:10px;font-weight:bold;color:#000000">6</div>
<div class="t" style="left:677px;top:513px;width:30px;height:14px;line-height:14px;text-align:center;font-size:10px;font-weight:bold;color:#000000">7</div>
<div class="t" style="left:768px;top:513px;width:30px;height:14px;line-height:14px;text-align:center;font-size:10px;font-weight:bold;color:#000000">8</div>
<div class="t" style="left:859px;top:513px;width:30px;height:14px;line-height:14px;text-align:center;font-size:10px;font-weight:bold;color:#000000">9</div>
<div class="t" style="left:950px;top:513px;width:30px;height:14px;line-height:14px;text-align:center;font-size:10px;font-weight:bold;color:#000000">10</div>
<div class="t" style="left:967px;top:523px;width:20px;height:12px;line-height:12px;text-align:left;font-size:10px;font-weight:bold;color:#000000">ms</div>
<div class="t" style="left:461px;top:522px;width:100px;height:14px;line-height:14px;text-align:center;font-size:10px;font-weight:bold;color:#000000;letter-spacing:0.85px">WAVEFORM</div>
<div class="t" style="left:11px;top:522px;width:90px;height:14px;line-height:14px;text-align:left;font-size:10px;font-weight:bold;color:#000000;letter-spacing:0.45px">+02:36:25:264</div>
<div class="t" style="left:293px;top:307px;width:60px;height:13px;line-height:13px;text-align:left;font-size:10px;font-weight:bold;letter-spacing:0.5px;color:#0000ff">A: Max=</div>
<div class="t" style="left:325.5px;top:307px;width:80px;height:13px;line-height:13px;text-align:right;font-size:10px;font-weight:bold;letter-spacing:0.5px;color:#0000ff">0.06 mV</div>
<div class="t" style="left:411px;top:307px;width:60px;height:13px;line-height:13px;text-align:left;font-size:10px;font-weight:bold;letter-spacing:0.5px;color:#0000ff">Min=</div>
<div class="t" style="left:425.5px;top:307px;width:80px;height:13px;line-height:13px;text-align:right;font-size:10px;font-weight:bold;letter-spacing:0.5px;color:#0000ff">-0.09 mV</div>
<div class="t" style="left:510px;top:307px;width:60px;height:13px;line-height:13px;text-align:left;font-size:10px;font-weight:bold;letter-spacing:0.5px;color:#0000ff">Mean=</div>
<div class="t" style="left:540.5px;top:307px;width:80px;height:13px;line-height:13px;text-align:right;font-size:10px;font-weight:bold;letter-spacing:0.5px;color:#0000ff">-15  μV</div>
<div class="t" style="left:625px;top:307px;width:60px;height:13px;line-height:13px;text-align:left;font-size:10px;font-weight:bold;letter-spacing:0.5px;color:#0000ff">RMS=</div>
<div class="t" style="left:651.5px;top:307px;width:80px;height:13px;line-height:13px;text-align:right;font-size:10px;font-weight:bold;letter-spacing:0.5px;color:#0000ff">32  μV</div>
<div class="t" style="left:293px;top:319px;width:60px;height:13px;line-height:13px;text-align:left;font-size:10px;font-weight:bold;letter-spacing:0.5px;color:#ff0000">B: Max=</div>
<div class="t" style="left:325.5px;top:319px;width:80px;height:13px;line-height:13px;text-align:right;font-size:10px;font-weight:bold;letter-spacing:0.5px;color:#ff0000">0.09 mV</div>
<div class="t" style="left:411px;top:319px;width:60px;height:13px;line-height:13px;text-align:left;font-size:10px;font-weight:bold;letter-spacing:0.5px;color:#ff0000">Min=</div>
<div class="t" style="left:425.5px;top:319px;width:80px;height:13px;line-height:13px;text-align:right;font-size:10px;font-weight:bold;letter-spacing:0.5px;color:#ff0000">-0.06 mV</div>
<div class="t" style="left:510px;top:319px;width:60px;height:13px;line-height:13px;text-align:left;font-size:10px;font-weight:bold;letter-spacing:0.5px;color:#ff0000">Mean=</div>
<div class="t" style="left:540.5px;top:319px;width:80px;height:13px;line-height:13px;text-align:right;font-size:10px;font-weight:bold;letter-spacing:0.5px;color:#ff0000">24  μV</div>
<div class="t" style="left:625px;top:319px;width:60px;height:13px;line-height:13px;text-align:left;font-size:10px;font-weight:bold;letter-spacing:0.5px;color:#ff0000">RMS=</div>
<div class="t" style="left:651.5px;top:319px;width:80px;height:13px;line-height:13px;text-align:right;font-size:10px;font-weight:bold;letter-spacing:0.5px;color:#ff0000">38  μV</div>
<div style="left:9px;top:539px;width:4px;height:22px;border-left:1px solid #fff;border-top:1px solid #fff;border-right:1px solid #a0a0a0;border-bottom:1px solid #a0a0a0"></div>
<div class="t" style="left:20px;top:540px;width:16px;height:22px;line-height:22px;text-align:center;font-size:14px;font-weight:bold">T</div>
<div class="sunk" style="left:38px;top:539px;width:187px;height:22px;background:#fff"></div>
<div class="t" style="left:41px;top:541px;width:164px;height:20px;line-height:20px;text-align:left;font-size:14px;font-weight:bold">10ms</div>
<div class="dd" style="left:206px;top:541px;width:17px;height:18px"></div>
<div style="left:211px;top:549px;width:7px;height:1px;background:#000"></div><div style="left:212px;top:550px;width:5px;height:1px;background:#000"></div><div style="left:213px;top:551px;width:3px;height:1px;background:#000"></div><div style="left:214px;top:552px;width:1px;height:1px;background:#000"></div>
<div class="sunk" style="left:225px;top:539px;width:150px;height:22px;background:#fff"></div>
<div class="t" style="left:228px;top:541px;width:127px;height:20px;line-height:20px;text-align:left;font-size:14px">×1</div>
<div class="dd" style="left:356px;top:541px;width:17px;height:18px"></div>
<div style="left:361px;top:549px;width:7px;height:1px;background:#000"></div><div style="left:362px;top:550px;width:5px;height:1px;background:#000"></div><div style="left:363px;top:551px;width:3px;height:1px;background:#000"></div><div style="left:364px;top:552px;width:1px;height:1px;background:#000"></div>
<div class="t" style="left:377px;top:540px;width:20px;height:22px;line-height:22px;text-align:center;font-size:14px;font-weight:bold;color:#0000ff">A</div>
<div class="sunk" style="left:398px;top:539px;width:180px;height:22px;background:#fff"></div>
<div class="t" style="left:401px;top:541px;width:157px;height:20px;line-height:20px;text-align:left;font-size:14px;font-weight:bold;color:#0000ff">Auto</div>
<div class="dd" style="left:559px;top:541px;width:17px;height:18px"></div>
<div style="left:564px;top:549px;width:7px;height:1px;background:#000"></div><div style="left:565px;top:550px;width:5px;height:1px;background:#000"></div><div style="left:566px;top:551px;width:3px;height:1px;background:#000"></div><div style="left:567px;top:552px;width:1px;height:1px;background:#000"></div>
<div class="sunk" style="left:578px;top:539px;width:150px;height:22px;background:#fff"></div>
<div class="t" style="left:581px;top:541px;width:127px;height:20px;line-height:20px;text-align:left;font-size:14px;font-weight:bold;color:#0000ff">Off</div>
<div class="dd" style="left:709px;top:541px;width:17px;height:18px"></div>
<div style="left:714px;top:549px;width:7px;height:1px;background:#000"></div><div style="left:715px;top:550px;width:5px;height:1px;background:#000"></div><div style="left:716px;top:551px;width:3px;height:1px;background:#000"></div><div style="left:717px;top:552px;width:1px;height:1px;background:#000"></div>
<div class="t" style="left:732px;top:540px;width:20px;height:22px;line-height:22px;text-align:center;font-size:14px;font-weight:bold">M</div>
<div class="sunk" style="left:751px;top:539px;width:131px;height:22px;background:#fff"></div>
<div class="t" style="left:754px;top:541px;width:108px;height:20px;line-height:20px;text-align:left;font-size:14px">A&amp;B</div>
<div class="dd" style="left:863px;top:541px;width:17px;height:18px"></div>
<div style="left:868px;top:549px;width:7px;height:1px;background:#000"></div><div style="left:869px;top:550px;width:5px;height:1px;background:#000"></div><div style="left:870px;top:551px;width:3px;height:1px;background:#000"></div><div style="left:871px;top:552px;width:1px;height:1px;background:#000"></div>
<div class="t" style="left:885px;top:540px;width:20px;height:22px;line-height:22px;text-align:center;font-size:14px;font-weight:bold;color:#ff0000">B</div>
<div class="sunk" style="left:905px;top:539px;width:125px;height:22px;background:#fff"></div>
<div class="t" style="left:908px;top:541px;width:118px;height:20px;line-height:20px;text-align:left;font-size:14px;font-weight:bold;color:#ff0000">Auto</div>
<div style="left:8px;top:562px;width:1007px;height:1px;background:#a0a0a0"></div>
<div style="left:7px;top:570px;width:1009px;height:381px;background:#f0f0f0;border:1px solid #999999"></div>
<div style="left:8px;top:571px;width:1007px;height:31px;background:#fff"></div>
<svg style="left:10px;top:577px" width="16" height="16" viewBox="0 0 16 16"><rect width="16" height="16" fill="#0000ff"/><path d="M0 16V6.5Q3 1 5.5 4.5T10 11.5Q13 13 16 9V16Z" fill="#ff0000"/><path d="M0 6.5Q3 1 5.5 4.5T10 11.5Q13 13 16 9" fill="none" stroke="#fff" stroke-width="1"/></svg>
<div class="t" style="left:31px;top:576px;width:200px;height:20px;line-height:20px;text-align:left;font-size:12px;color:#9a9a9a">Multi-Instrument Pro 3.8 [1]</div>
<div class="t" style="left:187px;top:576px;width:10px;height:20px;line-height:20px;text-align:left;font-size:12px;color:#9a9a9a">-</div>
<div class="t" style="left:201px;top:576px;width:200px;height:20px;line-height:20px;text-align:left;font-size:12px;letter-spacing:-0.25px;color:#9a9a9a">[+3DP+DLG+LCR+UDP+VBM+DHS]</div>
<div class="t" style="left:400px;top:576px;width:10px;height:20px;line-height:20px;text-align:left;font-size:12px;color:#9a9a9a">-</div>
<div class="t" style="left:414px;top:576px;width:300px;height:20px;line-height:20px;text-align:left;font-size:12px;color:#9a9a9a">&lt;Realtek ASIO&gt; - [Oscilloscope]</div>
<div style="left:896px;top:585px;width:10px;height:1px;background:#999"></div>
<svg style="left:941px;top:580px" width="11" height="11"><path d="M2.5 2.5V0.5H10.5V8.5H8.5M0.5 2.5H8.5V10.5H0.5Z" fill="none" stroke="#999" stroke-width="1"/></svg>
<svg style="left:987px;top:580px" width="11" height="11"><path d="M0.5 0.5L10.5 10.5M10.5 0.5L0.5 10.5" stroke="#999" stroke-width="1.1"/></svg>
<div style="left:8px;top:602px;width:1007px;height:19px;background:#fff"></div>
<svg style="left:15px;top:602px" width="16" height="16" viewBox="0 0 16 16"><rect width="16" height="16" fill="#00ff00"/><path d="M0 7L2 5L3.5 3.5H5.5L7 5L9 8L10.5 10L11.5 11H13L14.5 9.5L16 8" fill="none" stroke="#ffff00" stroke-width="1.1"/></svg>
<div class="t" style="left:38px;top:602px;width:80px;height:18px;line-height:18px;text-align:left;font-size:12px;color:#6d6d6d">File</div>
<div class="t" style="left:71px;top:602px;width:80px;height:18px;line-height:18px;text-align:left;font-size:12px;color:#6d6d6d">Setting</div>
<div class="t" style="left:122px;top:602px;width:80px;height:18px;line-height:18px;text-align:left;font-size:12px;color:#6d6d6d">Instrument</div>
<div class="t" style="left:194px;top:602px;width:80px;height:18px;line-height:18px;text-align:left;font-size:12px;color:#6d6d6d">Window</div>
<div class="t" style="left:252px;top:602px;width:80px;height:18px;line-height:18px;text-align:left;font-size:12px;color:#6d6d6d">Help</div>
<div style="left:958px;top:602px;width:18px;height:18px;border:1px solid #e6e6e6;background:#fff"></div>
<div style="left:977px;top:602px;width:18px;height:18px;border:1px solid #e6e6e6;background:#fff"></div>
<div style="left:996px;top:602px;width:18px;height:18px;border:1px solid #e6e6e6;background:#fff"></div>
<div style="left:963px;top:613px;width:7px;height:2px;background:#8a98a8"></div>
<div style="left:984px;top:607px;width:6px;height:2px;background:#8a98a8"></div>
<div style="left:989px;top:607px;width:1px;height:5px;background:#8a98a8"></div>
<div style="left:982px;top:610px;width:6px;height:2px;background:#8a98a8"></div>
<div style="left:982px;top:610px;width:1px;height:5px;background:#8a98a8"></div>
<div style="left:987px;top:610px;width:1px;height:5px;background:#8a98a8"></div>
<div style="left:982px;top:614px;width:6px;height:1px;background:#8a98a8"></div>
<svg style="left:1002px;top:608px" width="7" height="7"><path d="M0.6 0.6L6.4 6.4M6.4 0.6L0.6 6.4" stroke="#8a98a8" stroke-width="1.7"/></svg>
<div style="left:8px;top:621px;width:1007px;height:1px;background:#a0a0a0"></div>
<div style="left:8px;top:622px;width:1007px;height:1px;background:#fff"></div>
<div style="left:9px;top:623px;width:4px;height:22px;border-left:1px solid #fff;border-top:1px solid #fff;border-right:1px solid #a0a0a0;border-bottom:1px solid #a0a0a0"></div>
<div style="left:8px;top:645px;width:1007px;height:1px;background:#a0a0a0"></div>
<div style="left:8px;top:646px;width:1007px;height:1px;background:#fff"></div>
<div class="t" style="left:61px;top:624px;width:60px;height:20px;line-height:20px;text-align:left;font-size:14px;font-weight:bold;letter-spacing:-0.3px">Trigger</div>
<div class="sunk" style="left:175px;top:623px;width:139px;height:23px;background:#fff"></div>
<div class="t" style="left:179px;top:624px;width:116px;height:21px;line-height:21px;text-align:left;font-size:14px;font-weight:bold;letter-spacing:-0.5px">Normal</div>
<div class="dd" style="left:295px;top:625px;width:17px;height:19px"></div>
<div style="left:300px;top:633px;width:7px;height:1px;background:#000"></div><div style="left:301px;top:634px;width:5px;height:1px;background:#000"></div><div style="left:302px;top:635px;width:3px;height:1px;background:#000"></div><div style="left:303px;top:636px;width:1px;height:1px;background:#000"></div>
<div class="sunk" style="left:314px;top:623px;width:97px;height:23px;background:#fff"></div>
<div class="t" style="left:318px;top:624px;width:74px;height:21px;line-height:21px;text-align:left;font-size:14px;font-weight:bold">A</div>
<div class="dd" style="left:392px;top:625px;width:17px;height:19px"></div>
<div style="left:397px;top:633px;width:7px;height:1px;background:#000"></div><div style="left:398px;top:634px;width:5px;height:1px;background:#000"></div><div style="left:399px;top:635px;width:3px;height:1px;background:#000"></div><div style="left:400px;top:636px;width:1px;height:1px;background:#000"></div>
<div class="sunk" style="left:411px;top:623px;width:97px;height:23px;background:#fff"></div>
<div class="t" style="left:415px;top:624px;width:74px;height:21px;line-height:21px;text-align:left;font-size:14px;font-weight:bold">Up</div>
<div class="dd" style="left:489px;top:625px;width:17px;height:19px"></div>
<div style="left:494px;top:633px;width:7px;height:1px;background:#000"></div><div style="left:495px;top:634px;width:5px;height:1px;background:#000"></div><div style="left:496px;top:635px;width:3px;height:1px;background:#000"></div><div style="left:497px;top:636px;width:1px;height:1px;background:#000"></div>
<div class="sunk" style="left:508px;top:623px;width:88px;height:21px;background:#fff"></div>
<div class="t" style="left:510px;top:624px;width:84px;height:20px;line-height:20px;text-align:center;font-size:14px;font-weight:bold">0%</div>
<div class="dd" style="left:596px;top:623px;width:17px;height:11px"></div>
<div class="dd" style="left:596px;top:634px;width:17px;height:11px"></div>
<div style="left:603px;top:627px;width:1px;height:1px;background:#000"></div><div style="left:602px;top:628px;width:3px;height:1px;background:#000"></div><div style="left:601px;top:629px;width:5px;height:1px;background:#000"></div>
<div style="left:601px;top:639px;width:5px;height:1px;background:#000"></div><div style="left:602px;top:640px;width:3px;height:1px;background:#000"></div><div style="left:603px;top:641px;width:1px;height:1px;background:#000"></div>
<div style="left:614px;top:625px;width:2px;height:19px;border-left:1px solid #a0a0a0;border-right:1px solid #fff"></div>
<div class="sunk" style="left:633px;top:623px;width:88px;height:21px;background:#fff"></div>
<div class="t" style="left:635px;top:624px;width:84px;height:20px;line-height:20px;text-align:center;font-size:14px;font-weight:bold">0%</div>
<div class="dd" style="left:721px;top:623px;width:17px;height:11px"></div>
<div class="dd" style="left:721px;top:634px;width:17px;height:11px"></div>
<div style="left:728px;top:627px;width:1px;height:1px;background:#000"></div><div style="left:727px;top:628px;width:3px;height:1px;background:#000"></div><div style="left:726px;top:629px;width:5px;height:1px;background:#000"></div>
<div style="left:726px;top:639px;width:5px;height:1px;background:#000"></div><div style="left:727px;top:640px;width:3px;height:1px;background:#000"></div><div style="left:728px;top:641px;width:1px;height:1px;background:#000"></div>
<div style="left:739px;top:625px;width:2px;height:19px;border-left:1px solid #a0a0a0;border-right:1px solid #fff"></div>
<div class="sunk" style="left:758px;top:623px;width:97px;height:23px;background:#fff"></div>
<div class="t" style="left:762px;top:624px;width:74px;height:21px;line-height:21px;text-align:left;font-size:14px;font-weight:bold;letter-spacing:-0.6px">NIL</div>
<div class="dd" style="left:836px;top:625px;width:17px;height:19px"></div>
<div style="left:841px;top:633px;width:7px;height:1px;background:#000"></div><div style="left:842px;top:634px;width:5px;height:1px;background:#000"></div><div style="left:843px;top:635px;width:3px;height:1px;background:#000"></div><div style="left:844px;top:636px;width:1px;height:1px;background:#000"></div>
<div class="t" style="left:856px;top:624px;width:60px;height:20px;line-height:20px;text-align:left;font-size:14px;font-weight:bold;letter-spacing:-0.3px">Sample</div>
<div class="sunk" style="left:966px;top:623px;width:54px;height:23px;background:#fff"></div>
<div class="t" style="left:969px;top:624px;width:47px;height:21px;line-height:21px;text-align:left;font-size:14px;font-weight:bold">48kHz</div>
<div style="left:9px;top:647px;width:4px;height:22px;border-left:1px solid #fff;border-top:1px solid #fff;border-right:1px solid #a0a0a0;border-bottom:1px solid #a0a0a0"></div>
<div style="left:8px;top:669px;width:1007px;height:1px;background:#a0a0a0"></div>
<div style="left:8px;top:670px;width:1007px;height:1px;background:#fff"></div>
<svg style="left:20px;top:652px" width="12" height="11" viewBox="0 0 12 11" shape-rendering="crispEdges"><path d="M3.5 0H8.5L12 3.5V7.5L8.5 11H3.5L0 7.5V3.5Z" fill="#ff0000"/></svg>
<div style="left:38px;top:647px;width:22px;height:22px;border-top:1px solid #808080;border-left:1px solid #808080;border-right:1px solid #fff;border-bottom:1px solid #fff;background:repeating-conic-gradient(#fff 0 25%,#f0f0f0 0 50%) 0 0/2px 2px"></div>
<svg style="left:42px;top:651px" width="16" height="16" viewBox="0 0 16 16" shape-rendering="crispEdges"><rect width="16" height="16" fill="#00ff00"/><path d="M0 7L2 5L3.5 3.5H5.5L7 5L9 8L10.5 10L11.5 11H13L14.5 9.5L16 8" fill="none" stroke="#ffff00" stroke-width="1.1" shape-rendering="auto"/></svg>
<svg style="left:64px;top:650px" width="16" height="16" viewBox="0 0 16 16" shape-rendering="crispEdges"><rect width="16" height="16" fill="#0000ff"/><path d="M1.5 1V14M4.5 4V14M7.5 7V14M10.5 9V14M13.5 11V14" stroke="#ffff00" stroke-width="1"/><rect x="0" y="14" width="16" height="1" fill="#ffff00"/></svg>
<svg style="left:87px;top:650px" width="16" height="16" viewBox="0 0 16 16" shape-rendering="crispEdges"><rect width="16" height="16" fill="#800080"/><g fill="#ffff00"><rect x="2" y="1" width="2" height="1"/><rect x="1" y="2" width="1" height="5"/><rect x="4" y="2" width="1" height="5"/><rect x="2" y="7" width="2" height="1"/><rect x="1" y="8" width="1" height="5"/><rect x="4" y="8" width="1" height="5"/><rect x="2" y="13" width="2" height="1"/><rect x="7" y="1" width="2" height="1"/><rect x="6" y="2" width="1" height="5"/><rect x="9" y="2" width="1" height="5"/><rect x="7" y="7" width="2" height="1"/><rect x="6" y="8" width="1" height="5"/><rect x="9" y="8" width="1" height="5"/><rect x="7" y="13" width="2" height="1"/><rect x="12" y="1" width="2" height="1"/><rect x="11" y="2" width="1" height="5"/><rect x="14" y="2" width="1" height="5"/><rect x="12" y="7" width="2" height="1"/><rect x="11" y="8" width="1" height="5"/><rect x="14" y="8" width="1" height="5"/><rect x="12" y="13" width="2" height="1"/><rect x="10" y="12" width="1" height="1"/></g></svg>
<svg style="left:111px;top:651px" width="15" height="15" viewBox="0 0 15 15" shape-rendering="crispEdges"><path d="M4 0.5H14.5V10L10 14.5H0.5V4Z" fill="#fff" stroke="#a0a0a0" stroke-width="1"/><path d="M6 3H9L12 6V10L10 12H3V6Z" fill="#a0a0a0"/></svg>
<svg style="left:133px;top:650px" width="16" height="16" viewBox="0 0 16 16" shape-rendering="crispEdges"><rect width="16" height="16" fill="#ffff00"/><path d="M0 4.5H2.5V1.5H6.5V4.5H9.5V1.5H13.5V4.5H16" fill="none" stroke="#ff0000"/><path d="M0 9.5H2.5V6.5H6.5V9.5H9.5V6.5H13.5V9.5H16" fill="none" stroke="#00c000"/><path d="M0.5 15L3 11L5.5 15L8 11L10.5 15L13 11L15.5 15" fill="none" stroke="#0000ff" shape-rendering="auto"/></svg>
<svg style="left:156px;top:650px" width="16" height="16" viewBox="0 0 16 16" shape-rendering="crispEdges"><rect width="16" height="16" fill="#00ffff"/><rect x="2" y="1" width="6" height="3" fill="none" stroke="#0000ff"/><path d="M10 2.5L12 1V4ZM15 2.5L13 1V4Z" fill="#0000ff"/><text x="8" y="11.5" font-family="Liberation Sans" font-weight="bold" font-size="8" text-anchor="middle" letter-spacing="-0.4" fill="#000">DUT</text><path d="M0 13.5H16" stroke="#0000ff"/><circle cx="3" cy="15" r="1.2" fill="none" stroke="#0000ff" stroke-width="0.8"/><circle cx="8" cy="15" r="1.2" fill="none" stroke="#0000ff" stroke-width="0.8"/><circle cx="13" cy="15" r="1.2" fill="none" stroke="#0000ff" stroke-width="0.8"/></svg>
<svg style="left:179px;top:651px" width="16" height="14" viewBox="0 0 16 14" shape-rendering="crispEdges"><rect width="16" height="14" fill="#fff"/><path d="M0 3L2 1L4 3L6 1L8 3L10 1" fill="none" stroke="#ff0000" shape-rendering="auto"/><path d="M10 0H16L13 3Z" fill="#ff0000"/><path d="M0 8L2 6L4 8L6 6L8 8L10 6" fill="none" stroke="#00c000" shape-rendering="auto"/><path d="M10 5H16L13 8Z" fill="#00c000"/><path d="M0 13L2 11L4 13L6 11L8 13L10 11" fill="none" stroke="#0000ff" shape-rendering="auto"/><path d="M10 10H16L13 13Z" fill="#0000ff"/></svg>
<svg style="left:202px;top:650px" width="16" height="16" viewBox="0 0 16 16" shape-rendering="crispEdges"><rect width="16" height="16" fill="#fff"/><text x="0.5" y="7.5" font-family="Liberation Sans" font-weight="bold" font-size="8" fill="#0000ff">D</text><text x="6" y="7.5" font-family="Liberation Sans" font-weight="bold" font-size="8" fill="#ff0000">D</text><text x="11" y="7.5" font-family="Liberation Sans" font-weight="bold" font-size="8" fill="#00e000">P</text><circle cx="7.5" cy="11" r="2.8" fill="none" stroke="#000" stroke-width="1.2"/><path d="M6 11H9M7.5 9.5V12.5" stroke="#000" stroke-width="0.8"/><path d="M9.5 13L12 15.5" stroke="#000" stroke-width="1.5"/></svg>
<div style="left:224px;top:649px;width:2px;height:19px;border-left:1px solid #a0a0a0;border-right:1px solid #fff"></div>
<svg style="left:233px;top:650px" width="14" height="17" viewBox="0 0 14 17" shape-rendering="crispEdges"><g transform="translate(1,1)" fill="#fff"><rect x="3" y="0" width="6" height="1"/><rect x="5" y="1" width="2" height="3"/><path d="M3 4H9L12 7V13Q6 15 0 13V7Z"/></g><g fill="#a0a0a0"><rect x="3" y="0" width="6" height="1"/><rect x="5" y="1" width="2" height="3"/><path d="M3 4H9L12 7V13Q6 15 0 13V7Z"/></g><ellipse cx="6" cy="13" rx="4" ry="1.5" fill="#fff" stroke="#a0a0a0" stroke-width="0.8" shape-rendering="auto"/></svg>
<svg style="left:254px;top:651px" width="18" height="14" viewBox="0 0 18 14" shape-rendering="crispEdges"><g fill="#fff" transform="translate(1,1)"><rect x="3" y="0" width="2" height="8"/><rect x="0" y="7" width="8" height="2"/><text x="8" y="12.5" font-family="Liberation Sans" font-weight="bold" font-size="12">A</text></g><g fill="#a0a0a0"><rect x="3" y="0" width="2" height="8"/><rect x="0" y="7" width="8" height="2"/><text x="8" y="12.5" font-family="Liberation Sans" font-weight="bold" font-size="12">A</text></g></svg>
<svg style="left:277px;top:651px" width="18" height="14" viewBox="0 0 18 14" shape-rendering="crispEdges"><g fill="#fff" transform="translate(1,1)"><rect x="3" y="0" width="2" height="8"/><rect x="0" y="7" width="8" height="2"/><text x="8" y="12.5" font-family="Liberation Sans" font-weight="bold" font-size="12">B</text></g><g fill="#a0a0a0"><rect x="3" y="0" width="2" height="8"/><rect x="0" y="7" width="8" height="2"/><text x="8" y="12.5" font-family="Liberation Sans" font-weight="bold" font-size="12">B</text></g></svg>
<svg style="left:301px;top:650px" width="16" height="15" viewBox="0 0 16 15" shape-rendering="crispEdges"><path d="M4 4L14 13.5" stroke="#0000ff" stroke-width="1.6" shape-rendering="auto"/><circle cx="4" cy="4" r="3.5" fill="#00ffff" stroke="#c08080" stroke-width="0.4"/><path d="M4.5 12L9 9" stroke="#0000ff" stroke-width="1.2"/><circle cx="4" cy="13" r="1.8" fill="#00ffff" stroke="#0000ff" stroke-width="0.9"/></svg>
<svg style="left:323px;top:650px" width="17" height="16" viewBox="0 0 17 16" shape-rendering="crispEdges"><rect x="0" y="5" width="3" height="6" fill="#0000ff"/><path d="M3.5 5L7.5 1V15L3.5 11Z" fill="#ffff00" stroke="#0000ff" stroke-width="1"/><path d="M9.5 3.5Q12.5 8 9.5 12.5M12 1Q16.5 8 12 15" fill="none" stroke="#0000ff" stroke-width="1" shape-rendering="auto"/></svg>
<svg style="left:349px;top:653px" width="10" height="10" viewBox="0 0 10 10" shape-rendering="crispEdges"><path d="M0 0L10 4.5L0 9Z" fill="#00e000"/></svg>
<svg style="left:372px;top:653px" width="13" height="13" viewBox="0 0 13 13" shape-rendering="crispEdges"><path d="M0 0L10 5L0 10Z" fill="#00e000"/><ellipse cx="9" cy="10.5" rx="3.3" ry="1.8" fill="none" stroke="#00e000" stroke-width="1"/></svg>
<div class="sunk" style="left:390px;top:647px;width:104px;height:22px;background:#000"></div>
<div class="t" style="left:393px;top:649px;width:81px;height:20px;line-height:20px;text-align:left;font-size:13.5px;color:#6d6d6d;letter-spacing:-0.3px">AC</div>
<div class="dd" style="left:475px;top:649px;width:17px;height:18px"></div>
<div style="left:481px;top:658px;width:7px;height:1px;background:#fff"></div><div style="left:482px;top:659px;width:5px;height:1px;background:#fff"></div><div style="left:483px;top:660px;width:3px;height:1px;background:#fff"></div><div style="left:484px;top:661px;width:1px;height:1px;background:#fff"></div><div style="left:480px;top:657px;width:7px;height:1px;background:#a0a0a0"></div><div style="left:481px;top:658px;width:5px;height:1px;background:#a0a0a0"></div><div style="left:482px;top:659px;width:3px;height:1px;background:#a0a0a0"></div><div style="left:483px;top:660px;width:1px;height:1px;background:#a0a0a0"></div>
<div class="sunk" style="left:494px;top:647px;width:105px;height:22px;background:#000"></div>
<div class="t" style="left:497px;top:649px;width:82px;height:20px;line-height:20px;text-align:left;font-size:13.5px;color:#6d6d6d;letter-spacing:-0.3px">AC</div>
<div class="dd" style="left:580px;top:649px;width:17px;height:18px"></div>
<div style="left:586px;top:658px;width:7px;height:1px;background:#fff"></div><div style="left:587px;top:659px;width:5px;height:1px;background:#fff"></div><div style="left:588px;top:660px;width:3px;height:1px;background:#fff"></div><div style="left:589px;top:661px;width:1px;height:1px;background:#fff"></div><div style="left:585px;top:657px;width:7px;height:1px;background:#a0a0a0"></div><div style="left:586px;top:658px;width:5px;height:1px;background:#a0a0a0"></div><div style="left:587px;top:659px;width:3px;height:1px;background:#a0a0a0"></div><div style="left:588px;top:660px;width:1px;height:1px;background:#a0a0a0"></div>
<div class="sunk" style="left:599px;top:647px;width:215px;height:22px;background:#000"></div>
<div class="t" style="left:602px;top:649px;width:192px;height:20px;line-height:20px;text-align:left;font-size:13.5px;color:#6d6d6d;letter-spacing:-0.3px">±1V</div>
<div class="dd" style="left:795px;top:649px;width:17px;height:18px"></div>
<div style="left:801px;top:658px;width:7px;height:1px;background:#fff"></div><div style="left:802px;top:659px;width:5px;height:1px;background:#fff"></div><div style="left:803px;top:660px;width:3px;height:1px;background:#fff"></div><div style="left:804px;top:661px;width:1px;height:1px;background:#fff"></div><div style="left:800px;top:657px;width:7px;height:1px;background:#a0a0a0"></div><div style="left:801px;top:658px;width:5px;height:1px;background:#a0a0a0"></div><div style="left:802px;top:659px;width:3px;height:1px;background:#a0a0a0"></div><div style="left:803px;top:660px;width:1px;height:1px;background:#a0a0a0"></div>
<div class="sunk" style="left:814px;top:647px;width:215px;height:22px;background:#000"></div>
<div class="t" style="left:817px;top:649px;width:192px;height:20px;line-height:20px;text-align:left;font-size:13.5px;color:#6d6d6d;letter-spacing:-0.3px">±1V</div>
<div class="dd" style="left:1010px;top:649px;width:17px;height:18px"></div>
<div style="left:1016px;top:658px;width:7px;height:1px;background:#fff"></div><div style="left:1017px;top:659px;width:5px;height:1px;background:#fff"></div><div style="left:1018px;top:660px;width:3px;height:1px;background:#fff"></div><div style="left:1019px;top:661px;width:1px;height:1px;background:#fff"></div><div style="left:1015px;top:657px;width:7px;height:1px;background:#a0a0a0"></div><div style="left:1016px;top:658px;width:5px;height:1px;background:#a0a0a0"></div><div style="left:1017px;top:659px;width:3px;height:1px;background:#a0a0a0"></div><div style="left:1018px;top:660px;width:1px;height:1px;background:#a0a0a0"></div>
<div style="left:9px;top:671px;width:4px;height:21px;border-left:1px solid #fff;border-top:1px solid #fff;border-right:1px solid #a0a0a0;border-bottom:1px solid #a0a0a0"></div>
<div class="t" style="left:14px;top:675px;width:96px;height:18px;line-height:18px;text-align:center;font-size:12px;color:#000">Home</div>
<div class="t" style="left:110px;top:675px;width:96px;height:18px;line-height:18px;text-align:center;font-size:12px;color:#000">OCT3</div>
<div class="t" style="left:206px;top:675px;width:96px;height:18px;line-height:18px;text-align:center;font-size:12px;color:#000">OCT6</div>
<div class="t" style="left:302px;top:675px;width:96px;height:18px;line-height:18px;text-align:center;font-size:12px;color:#000">Polarity</div>
<div class="t" style="left:398px;top:675px;width:96px;height:18px;line-height:18px;text-align:center;font-size:12px;color:#000">THD</div>
<div class="t" style="left:494px;top:675px;width:96px;height:18px;line-height:18px;text-align:center;font-size:12px;color:#000">THDa</div>
<div class="t" style="left:590px;top:675px;width:96px;height:18px;line-height:18px;text-align:center;font-size:12px;color:#000">THDnsl</div>
<div class="t" style="left:686px;top:675px;width:96px;height:18px;line-height:18px;text-align:center;font-size:12px;color:#000">THDres</div>
<div class="t" style="left:782px;top:675px;width:96px;height:18px;line-height:18px;text-align:center;font-size:12px;color:#000">IMDsmp</div>
<div class="t" style="left:878px;top:675px;width:96px;height:18px;line-height:18px;text-align:center;font-size:12px;color:#000">IMDdin</div>
<div class="t" style="left:974px;top:675px;width:96px;height:18px;line-height:18px;text-align:center;font-size:12px;color:#000">IMDxxx</div>
<div style="left:8px;top:692px;width:1006px;height:234px;background:#000;border-top:1px solid #a0a0a0;border-left:1px solid #a0a0a0;border-right:1px solid #fff;border-bottom:1px solid #fff;box-shadow:inset 1px 1px 0 #000"></div>
<svg style="left:0;top:0" width="1018" height="952" shape-rendering="crispEdges"><path d="M58 746.5H965" stroke="#5a5a5a" stroke-width="1" stroke-dasharray="3 3"/><path d="M58 763.5H965" stroke="#5a5a5a" stroke-width="1" stroke-dasharray="3 3"/><path d="M58 780.5H965" stroke="#5a5a5a" stroke-width="1" stroke-dasharray="3 3"/><path d="M58 796.5H965" stroke="#5a5a5a" stroke-width="1" stroke-dasharray="3 3"/><path d="M58 813.5H965" stroke="#5a5a5a" stroke-width="1" stroke-dasharray="3 3"/><path d="M58 830.5H965" stroke="#5a5a5a" stroke-width="1" stroke-dasharray="3 3"/><path d="M58 846.5H965" stroke="#5a5a5a" stroke-width="1" stroke-dasharray="3 3"/><path d="M58 863.5H965" stroke="#5a5a5a" stroke-width="1" stroke-dasharray="3 3"/><path d="M58 880.5H965" stroke="#5a5a5a" stroke-width="1" stroke-dasharray="3 3"/><path d="M148.5 730V897" stroke="#5a5a5a" stroke-width="1" stroke-dasharray="3 3"/><path d="M239.5 730V897" stroke="#5a5a5a" stroke-width="1" stroke-dasharray="3 3"/><path d="M330.5 730V897" stroke="#5a5a5a" stroke-width="1" stroke-dasharray="3 3"/><path d="M420.5 730V897" stroke="#5a5a5a" stroke-width="1" stroke-dasharray="3 3"/><path d="M511.5 730V897" stroke="#5a5a5a" stroke-width="1" stroke-dasharray="3 3"/><path d="M602.5 730V897" stroke="#5a5a5a" stroke-width="1" stroke-dasharray="3 3"/><path d="M692.5 730V897" stroke="#5a5a5a" stroke-width="1" stroke-dasharray="3 3"/><path d="M783.5 730V897" stroke="#5a5a5a" stroke-width="1" stroke-dasharray="3 3"/><path d="M874.5 730V897" stroke="#5a5a5a" stroke-width="1" stroke-dasharray="3 3"/><rect x="58.5" y="730.5" width="907" height="167" fill="none" stroke="#727272" stroke-width="1"/><path d="M56 730.5H62M58.5 730V736" stroke="#00ffff" stroke-width="1"/></svg>
<svg style="left:0;top:0" width="1018" height="952" shape-rendering="crispEdges"><rect x="58" y="813" width="907" height="1" fill="#ffff00"/><rect x="59" y="812" width="5" height="1" fill="#ffff00"/><rect x="64" y="812" width="4" height="1" fill="#00e0e0"/><rect x="68" y="812" width="9" height="1" fill="#ffff00"/><rect x="77" y="812" width="3" height="1" fill="#ffff00"/><rect x="80" y="812" width="9" height="1" fill="#00e0e0"/><rect x="89" y="812" width="5" height="1" fill="#00e0e0"/><rect x="94" y="812" width="9" height="1" fill="#ffff00"/><rect x="103" y="812" width="9" height="1" fill="#00e0e0"/><rect x="112" y="812" width="4" height="1" fill="#00e0e0"/><rect x="128" y="812" width="3" height="1" fill="#00e0e0"/><rect x="131" y="812" width="2" height="1" fill="#00e0e0"/><rect x="135" y="812" width="6" height="1" fill="#00e0e0"/><rect x="149" y="812" width="8" height="1" fill="#00e0e0"/><rect x="170" y="812" width="3" height="1" fill="#00e0e0"/><rect x="173" y="812" width="9" height="1" fill="#00e0e0"/><rect x="190" y="812" width="6" height="1" fill="#00e0e0"/><rect x="196" y="812" width="8" height="1" fill="#ffff00"/><rect x="204" y="812" width="8" height="1" fill="#ffff00"/><rect x="212" y="812" width="7" height="1" fill="#ffff00"/><rect x="221" y="812" width="4" height="1" fill="#ffff00"/><rect x="235" y="812" width="5" height="1" fill="#ffff00"/><rect x="240" y="812" width="6" height="1" fill="#00e0e0"/><rect x="246" y="812" width="3" height="1" fill="#00e0e0"/><rect x="249" y="812" width="9" height="1" fill="#00e0e0"/><rect x="258" y="812" width="3" height="1" fill="#00e0e0"/><rect x="261" y="812" width="4" height="1" fill="#00e0e0"/><rect x="273" y="812" width="3" height="1" fill="#00e0e0"/><rect x="276" y="812" width="2" height="1" fill="#00e0e0"/><rect x="278" y="812" width="7" height="1" fill="#ffff00"/><rect x="285" y="812" width="6" height="1" fill="#ffff00"/><rect x="291" y="812" width="2" height="1" fill="#00e0e0"/><rect x="293" y="812" width="3" height="1" fill="#00e0e0"/><rect x="298" y="812" width="8" height="1" fill="#00e0e0"/><rect x="306" y="812" width="6" height="1" fill="#00e0e0"/><rect x="314" y="812" width="7" height="1" fill="#00e0e0"/><rect x="325" y="812" width="8" height="1" fill="#00e0e0"/><rect x="333" y="812" width="8" height="1" fill="#ffff00"/><rect x="341" y="812" width="3" height="1" fill="#ffff00"/><rect x="344" y="812" width="6" height="1" fill="#00e0e0"/><rect x="363" y="812" width="6" height="1" fill="#ffff00"/><rect x="371" y="812" width="7" height="1" fill="#00e0e0"/><rect x="378" y="812" width="4" height="1" fill="#00e0e0"/><rect x="382" y="812" width="7" height="1" fill="#00e0e0"/><rect x="389" y="812" width="7" height="1" fill="#ffff00"/><rect x="402" y="812" width="2" height="1" fill="#ffff00"/><rect x="406" y="812" width="6" height="1" fill="#ffff00"/><rect x="412" y="812" width="6" height="1" fill="#ffff00"/><rect x="418" y="812" width="7" height="1" fill="#00e0e0"/><rect x="425" y="812" width="4" height="1" fill="#00e0e0"/><rect x="436" y="812" width="6" height="1" fill="#00e0e0"/><rect x="442" y="812" width="8" height="1" fill="#00e0e0"/><rect x="452" y="812" width="4" height="1" fill="#00e0e0"/><rect x="456" y="812" width="5" height="1" fill="#ffff00"/><rect x="461" y="812" width="6" height="1" fill="#00e0e0"/><rect x="467" y="812" width="4" height="1" fill="#ffff00"/><rect x="471" y="812" width="3" height="1" fill="#00e0e0"/><rect x="481" y="812" width="5" height="1" fill="#00e0e0"/><rect x="486" y="812" width="4" height="1" fill="#00e0e0"/><rect x="495" y="812" width="9" height="1" fill="#00e0e0"/><rect x="504" y="812" width="3" height="1" fill="#00e0e0"/><rect x="507" y="812" width="5" height="1" fill="#00e0e0"/><rect x="526" y="812" width="7" height="1" fill="#ffff00"/><rect x="533" y="812" width="8" height="1" fill="#00e0e0"/><rect x="541" y="812" width="6" height="1" fill="#00e0e0"/><rect x="547" y="812" width="8" height="1" fill="#00e0e0"/><rect x="555" y="812" width="8" height="1" fill="#00e0e0"/><rect x="563" y="812" width="8" height="1" fill="#00e0e0"/><rect x="571" y="812" width="2" height="1" fill="#00e0e0"/><rect x="573" y="812" width="8" height="1" fill="#ffff00"/><rect x="581" y="812" width="5" height="1" fill="#00e0e0"/><rect x="595" y="812" width="6" height="1" fill="#ffff00"/><rect x="606" y="812" width="6" height="1" fill="#00e0e0"/><rect x="612" y="812" width="5" height="1" fill="#00e0e0"/><rect x="622" y="812" width="8" height="1" fill="#ffff00"/><rect x="630" y="812" width="2" height="1" fill="#00e0e0"/><rect x="632" y="812" width="3" height="1" fill="#00e0e0"/><rect x="635" y="812" width="6" height="1" fill="#00e0e0"/><rect x="641" y="812" width="2" height="1" fill="#ffff00"/><rect x="643" y="812" width="8" height="1" fill="#00e0e0"/><rect x="651" y="812" width="3" height="1" fill="#00e0e0"/><rect x="669" y="812" width="2" height="1" fill="#00e0e0"/><rect x="671" y="812" width="5" height="1" fill="#00e0e0"/><rect x="676" y="812" width="3" height="1" fill="#00e0e0"/><rect x="689" y="812" width="2" height="1" fill="#00e0e0"/><rect x="691" y="812" width="8" height="1" fill="#00e0e0"/><rect x="699" y="812" width="6" height="1" fill="#00e0e0"/><rect x="705" y="812" width="8" height="1" fill="#00e0e0"/><rect x="722" y="812" width="4" height="1" fill="#00e0e0"/><rect x="726" y="812" width="2" height="1" fill="#00e0e0"/><rect x="730" y="812" width="3" height="1" fill="#ffff00"/><rect x="733" y="812" width="9" height="1" fill="#00e0e0"/><rect x="742" y="812" width="7" height="1" fill="#00e0e0"/><rect x="749" y="812" width="8" height="1" fill="#ffff00"/><rect x="757" y="812" width="6" height="1" fill="#00e0e0"/><rect x="768" y="812" width="8" height="1" fill="#00e0e0"/><rect x="786" y="812" width="4" height="1" fill="#00e0e0"/><rect x="790" y="812" width="9" height="1" fill="#ffff00"/><rect x="799" y="812" width="8" height="1" fill="#ffff00"/><rect x="807" y="812" width="2" height="1" fill="#ffff00"/><rect x="809" y="812" width="8" height="1" fill="#00e0e0"/><rect x="826" y="812" width="7" height="1" fill="#00e0e0"/><rect x="833" y="812" width="8" height="1" fill="#00e0e0"/><rect x="841" y="812" width="5" height="1" fill="#00e0e0"/><rect x="846" y="812" width="6" height="1" fill="#ffff00"/><rect x="855" y="812" width="5" height="1" fill="#00e0e0"/><rect x="869" y="812" width="6" height="1" fill="#00e0e0"/><rect x="878" y="812" width="8" height="1" fill="#ffff00"/><rect x="886" y="812" width="7" height="1" fill="#ffff00"/><rect x="896" y="812" width="2" height="1" fill="#00e0e0"/><rect x="903" y="812" width="2" height="1" fill="#ffff00"/><rect x="905" y="812" width="3" height="1" fill="#ffff00"/><rect x="908" y="812" width="8" height="1" fill="#00e0e0"/><rect x="916" y="812" width="2" height="1" fill="#00e0e0"/><rect x="918" y="812" width="3" height="1" fill="#00e0e0"/><rect x="921" y="812" width="3" height="1" fill="#ffff00"/><rect x="924" y="812" width="6" height="1" fill="#ffff00"/><rect x="930" y="812" width="3" height="1" fill="#00e0e0"/><rect x="933" y="812" width="5" height="1" fill="#00e0e0"/><rect x="941" y="812" width="2" height="1" fill="#ffff00"/><rect x="952" y="812" width="5" height="1" fill="#00e0e0"/><rect x="957" y="812" width="8" height="1" fill="#00e0e0"/><rect x="676" y="814" width="2" height="1" fill="#c8c800"/><rect x="421" y="814" width="2" height="1" fill="#c8c800"/><rect x="148" y="814" width="2" height="1" fill="#c8c800"/><rect x="575" y="814" width="1" height="1" fill="#c8c800"/><rect x="485" y="814" width="1" height="1" fill="#c8c800"/><rect x="488" y="814" width="2" height="1" fill="#c8c800"/><rect x="222" y="814" width="2" height="1" fill="#c8c800"/><rect x="215" y="814" width="1" height="1" fill="#c8c800"/><rect x="161" y="814" width="2" height="1" fill="#c8c800"/><rect x="829" y="814" width="2" height="1" fill="#c8c800"/><rect x="778" y="814" width="2" height="1" fill="#c8c800"/><rect x="663" y="814" width="1" height="1" fill="#c8c800"/><rect x="202" y="814" width="2" height="1" fill="#c8c800"/><rect x="833" y="814" width="1" height="1" fill="#c8c800"/><rect x="213" y="814" width="2" height="1" fill="#c8c800"/><rect x="300" y="814" width="2" height="1" fill="#c8c800"/><rect x="750" y="814" width="2" height="1" fill="#c8c800"/><rect x="672" y="814" width="2" height="1" fill="#c8c800"/><rect x="285" y="814" width="2" height="1" fill="#c8c800"/><rect x="86" y="814" width="2" height="1" fill="#c8c800"/><rect x="553" y="814" width="2" height="1" fill="#c8c800"/><rect x="268" y="814" width="1" height="1" fill="#c8c800"/><rect x="646" y="814" width="2" height="1" fill="#c8c800"/><rect x="307" y="814" width="2" height="1" fill="#c8c800"/><rect x="557" y="814" width="1" height="1" fill="#c8c800"/><path d="M292 813.5L294 815.5L296 813.5" fill="none" stroke="#ffff00" stroke-width="1"/><path d="M435 813.5L437 815.5L439 813.5" fill="none" stroke="#ffff00" stroke-width="1"/><path d="M323 813.5L325 815.5L327 813.5" fill="none" stroke="#ffff00" stroke-width="1"/><path d="M437 813.5L439 815.5L441 813.5" fill="none" stroke="#ffff00" stroke-width="1"/><path d="M384 813.5L386 815.5L388 813.5" fill="none" stroke="#ffff00" stroke-width="1"/><path d="M183 813.5L185 815.5L187 813.5" fill="none" stroke="#ffff00" stroke-width="1"/><path d="M58.5 813V803M55 807L58.5 803L61 807" fill="none" stroke="#00ffff" stroke-width="1"/></svg>
<div class="t" style="left:9px;top:724px;width:47px;height:14px;line-height:14px;text-align:right;font-size:11px;font-weight:bold;color:#00ffff">1</div>
<div class="t" style="left:967px;top:724px;width:47px;height:14px;line-height:14px;text-align:left;font-size:11px;font-weight:bold;color:#ffff00">1</div>
<div class="t" style="left:9px;top:740px;width:47px;height:14px;line-height:14px;text-align:right;font-size:11px;font-weight:bold;color:#00ffff">0.8</div>
<div class="t" style="left:967px;top:740px;width:47px;height:14px;line-height:14px;text-align:left;font-size:11px;font-weight:bold;color:#ffff00">0.8</div>
<div class="t" style="left:9px;top:757px;width:47px;height:14px;line-height:14px;text-align:right;font-size:11px;font-weight:bold;color:#00ffff">0.6</div>
<div class="t" style="left:967px;top:757px;width:47px;height:14px;line-height:14px;text-align:left;font-size:11px;font-weight:bold;color:#ffff00">0.6</div>
<div class="t" style="left:9px;top:774px;width:47px;height:14px;line-height:14px;text-align:right;font-size:11px;font-weight:bold;color:#00ffff">0.4</div>
<div class="t" style="left:967px;top:774px;width:47px;height:14px;line-height:14px;text-align:left;font-size:11px;font-weight:bold;color:#ffff00">0.4</div>
<div class="t" style="left:9px;top:790px;width:47px;height:14px;line-height:14px;text-align:right;font-size:11px;font-weight:bold;color:#00ffff">0.2</div>
<div class="t" style="left:967px;top:790px;width:47px;height:14px;line-height:14px;text-align:left;font-size:11px;font-weight:bold;color:#ffff00">0.2</div>
<div class="t" style="left:9px;top:807px;width:47px;height:14px;line-height:14px;text-align:right;font-size:11px;font-weight:bold;color:#00ffff">0</div>
<div class="t" style="left:967px;top:807px;width:47px;height:14px;line-height:14px;text-align:left;font-size:11px;font-weight:bold;color:#ffff00">0</div>
<div class="t" style="left:9px;top:824px;width:47px;height:14px;line-height:14px;text-align:right;font-size:11px;font-weight:bold;color:#00ffff">-0.2</div>
<div class="t" style="left:967px;top:824px;width:47px;height:14px;line-height:14px;text-align:left;font-size:11px;font-weight:bold;color:#ffff00">-0.2</div>
<div class="t" style="left:9px;top:840px;width:47px;height:14px;line-height:14px;text-align:right;font-size:11px;font-weight:bold;color:#00ffff">-0.4</div>
<div class="t" style="left:967px;top:840px;width:47px;height:14px;line-height:14px;text-align:left;font-size:11px;font-weight:bold;color:#ffff00">-0.4</div>
<div class="t" style="left:9px;top:857px;width:47px;height:14px;line-height:14px;text-align:right;font-size:11px;font-weight:bold;color:#00ffff">-0.6</div>
<div class="t" style="left:967px;top:857px;width:47px;height:14px;line-height:14px;text-align:left;font-size:11px;font-weight:bold;color:#ffff00">-0.6</div>
<div class="t" style="left:9px;top:874px;width:47px;height:14px;line-height:14px;text-align:right;font-size:11px;font-weight:bold;color:#00ffff">-0.8</div>
<div class="t" style="left:967px;top:874px;width:47px;height:14px;line-height:14px;text-align:left;font-size:11px;font-weight:bold;color:#ffff00">-0.8</div>
<div class="t" style="left:9px;top:891px;width:47px;height:14px;line-height:14px;text-align:right;font-size:11px;font-weight:bold;color:#00ffff">-1</div>
<div class="t" style="left:967px;top:891px;width:47px;height:14px;line-height:14px;text-align:left;font-size:11px;font-weight:bold;color:#ffff00">-1</div>
<div class="t" style="left:32px;top:706px;width:60px;height:14px;line-height:14px;text-align:left;font-size:11px;font-weight:bold;color:#00ffff">A (V)</div>
<div class="t" style="left:965px;top:706px;width:60px;height:14px;line-height:14px;text-align:left;font-size:11px;font-weight:bold;color:#ffff00">B (V)</div>
<svg style="left:946px;top:734px" width="19" height="11" fill="#ffffff" shape-rendering="crispEdges"><rect x="0" y="0" width="5" height="1"/><rect x="8" y="0" width="5" height="1"/><rect x="15" y="0" width="3" height="1"/><rect x="0" y="2" width="5" height="1"/><rect x="8" y="2" width="5" height="1"/><rect x="15" y="2" width="3" height="1"/><rect x="0" y="4" width="6" height="1"/><rect x="7" y="4" width="6" height="1"/><rect x="15" y="4" width="3" height="1"/><rect x="0" y="6" width="3" height="5"/><rect x="4" y="6" width="5" height="2"/><rect x="5" y="8" width="3" height="3"/><rect x="10" y="6" width="3" height="5"/><rect x="15" y="6" width="3" height="5"/></svg>
<div class="t" style="left:43px;top:901px;width:30px;height:14px;line-height:14px;text-align:center;font-size:10px;font-weight:bold;color:#ffffff">0</div>
<div class="t" style="left:133px;top:901px;width:30px;height:14px;line-height:14px;text-align:center;font-size:10px;font-weight:bold;color:#ffffff">1</div>
<div class="t" style="left:224px;top:901px;width:30px;height:14px;line-height:14px;text-align:center;font-size:10px;font-weight:bold;color:#ffffff">2</div>
<div class="t" style="left:315px;top:901px;width:30px;height:14px;line-height:14px;text-align:center;font-size:10px;font-weight:bold;color:#ffffff">3</div>
<div class="t" style="left:405px;top:901px;width:30px;height:14px;line-height:14px;text-align:center;font-size:10px;font-weight:bold;color:#ffffff">4</div>
<div class="t" style="left:496px;top:901px;width:30px;height:14px;line-height:14px;text-align:center;font-size:10px;font-weight:bold;color:#ffffff">5</div>
<div class="t" style="left:587px;top:901px;width:30px;height:14px;line-height:14px;text-align:center;font-size:10px;font-weight:bold;color:#ffffff">6</div>
<div class="t" style="left:677px;top:901px;width:30px;height:14px;line-height:14px;text-align:center;font-size:10px;font-weight:bold;color:#ffffff">7</div>
<div class="t" style="left:768px;top:901px;width:30px;height:14px;line-height:14px;text-align:center;font-size:10px;font-weight:bold;color:#ffffff">8</div>
<div class="t" style="left:859px;top:901px;width:30px;height:14px;line-height:14px;text-align:center;font-size:10px;font-weight:bold;color:#ffffff">9</div>
<div class="t" style="left:950px;top:901px;width:30px;height:14px;line-height:14px;text-align:center;font-size:10px;font-weight:bold;color:#ffffff">10</div>
<div class="t" style="left:967px;top:911px;width:20px;height:12px;line-height:12px;text-align:left;font-size:10px;font-weight:bold;color:#ffffff">ms</div>
<div class="t" style="left:461px;top:910px;width:100px;height:14px;line-height:14px;text-align:center;font-size:10px;font-weight:bold;color:#ffffff;letter-spacing:0.85px">WAVEFORM</div>
<div class="t" style="left:11px;top:910px;width:90px;height:14px;line-height:14px;text-align:left;font-size:10px;font-weight:bold;color:#ffffff;letter-spacing:0.45px">+02:36:31:133</div>
<div class="t" style="left:293px;top:695px;width:60px;height:13px;line-height:13px;text-align:left;font-size:10px;font-weight:bold;letter-spacing:0.5px;color:#00ffff">A: Max=</div>
<div class="t" style="left:325.5px;top:695px;width:80px;height:13px;line-height:13px;text-align:right;font-size:10px;font-weight:bold;letter-spacing:0.5px;color:#00ffff">15.63 mV</div>
<div class="t" style="left:411px;top:695px;width:60px;height:13px;line-height:13px;text-align:left;font-size:10px;font-weight:bold;letter-spacing:0.5px;color:#00ffff">Min=</div>
<div class="t" style="left:425.5px;top:695px;width:80px;height:13px;line-height:13px;text-align:right;font-size:10px;font-weight:bold;letter-spacing:0.5px;color:#00ffff">-7.81 mV</div>
<div class="t" style="left:510px;top:695px;width:60px;height:13px;line-height:13px;text-align:left;font-size:10px;font-weight:bold;letter-spacing:0.5px;color:#00ffff">Mean=</div>
<div class="t" style="left:540.5px;top:695px;width:80px;height:13px;line-height:13px;text-align:right;font-size:10px;font-weight:bold;letter-spacing:0.5px;color:#00ffff">1.306 mV</div>
<div class="t" style="left:625px;top:695px;width:60px;height:13px;line-height:13px;text-align:left;font-size:10px;font-weight:bold;letter-spacing:0.5px;color:#00ffff">RMS=</div>
<div class="t" style="left:651.5px;top:695px;width:80px;height:13px;line-height:13px;text-align:right;font-size:10px;font-weight:bold;letter-spacing:0.5px;color:#00ffff">3.806 mV</div>
<div class="t" style="left:293px;top:707px;width:60px;height:13px;line-height:13px;text-align:left;font-size:10px;font-weight:bold;letter-spacing:0.5px;color:#ffff00">B: Max=</div>
<div class="t" style="left:325.5px;top:707px;width:80px;height:13px;line-height:13px;text-align:right;font-size:10px;font-weight:bold;letter-spacing:0.5px;color:#ffff00">15.63 mV</div>
<div class="t" style="left:411px;top:707px;width:60px;height:13px;line-height:13px;text-align:left;font-size:10px;font-weight:bold;letter-spacing:0.5px;color:#ffff00">Min=</div>
<div class="t" style="left:425.5px;top:707px;width:80px;height:13px;line-height:13px;text-align:right;font-size:10px;font-weight:bold;letter-spacing:0.5px;color:#ffff00">-31.25 mV</div>
<div class="t" style="left:510px;top:707px;width:60px;height:13px;line-height:13px;text-align:left;font-size:10px;font-weight:bold;letter-spacing:0.5px;color:#ffff00">Mean=</div>
<div class="t" style="left:540.5px;top:707px;width:80px;height:13px;line-height:13px;text-align:right;font-size:10px;font-weight:bold;letter-spacing:0.5px;color:#ffff00">-75  μV</div>
<div class="t" style="left:625px;top:707px;width:60px;height:13px;line-height:13px;text-align:left;font-size:10px;font-weight:bold;letter-spacing:0.5px;color:#ffff00">RMS=</div>
<div class="t" style="left:651.5px;top:707px;width:80px;height:13px;line-height:13px;text-align:right;font-size:10px;font-weight:bold;letter-spacing:0.5px;color:#ffff00">5.676 mV</div>
<div style="left:9px;top:927px;width:4px;height:22px;border-left:1px solid #fff;border-top:1px solid #fff;border-right:1px solid #a0a0a0;border-bottom:1px solid #a0a0a0"></div>
<div class="t" style="left:20px;top:928px;width:16px;height:22px;line-height:22px;text-align:center;font-size:14px;font-weight:bold">T</div>
<div class="sunk" style="left:38px;top:927px;width:187px;height:22px;background:#fff"></div>
<div class="t" style="left:41px;top:929px;width:164px;height:20px;line-height:20px;text-align:left;font-size:14px;font-weight:bold">10ms</div>
<div class="dd" style="left:206px;top:929px;width:17px;height:18px"></div>
<div style="left:211px;top:937px;width:7px;height:1px;background:#000"></div><div style="left:212px;top:938px;width:5px;height:1px;background:#000"></div><div style="left:213px;top:939px;width:3px;height:1px;background:#000"></div><div style="left:214px;top:940px;width:1px;height:1px;background:#000"></div>
<div class="sunk" style="left:225px;top:927px;width:150px;height:22px;background:#fff"></div>
<div class="t" style="left:228px;top:929px;width:127px;height:20px;line-height:20px;text-align:left;font-size:14px">×1</div>
<div class="dd" style="left:356px;top:929px;width:17px;height:18px"></div>
<div style="left:361px;top:937px;width:7px;height:1px;background:#000"></div><div style="left:362px;top:938px;width:5px;height:1px;background:#000"></div><div style="left:363px;top:939px;width:3px;height:1px;background:#000"></div><div style="left:364px;top:940px;width:1px;height:1px;background:#000"></div>
<div class="t" style="left:377px;top:928px;width:20px;height:22px;line-height:22px;text-align:center;font-size:14px;font-weight:bold;color:#000">A</div>
<div class="sunk" style="left:398px;top:927px;width:180px;height:22px;background:#000"></div>
<div class="t" style="left:401px;top:929px;width:157px;height:20px;line-height:20px;text-align:left;font-size:14px;font-weight:bold;color:#00ffff">Auto</div>
<div class="dd" style="left:559px;top:929px;width:17px;height:18px"></div>
<div style="left:564px;top:937px;width:7px;height:1px;background:#000"></div><div style="left:565px;top:938px;width:5px;height:1px;background:#000"></div><div style="left:566px;top:939px;width:3px;height:1px;background:#000"></div><div style="left:567px;top:940px;width:1px;height:1px;background:#000"></div>
<div class="sunk" style="left:578px;top:927px;width:150px;height:22px;background:#000"></div>
<div class="t" style="left:581px;top:929px;width:127px;height:20px;line-height:20px;text-align:left;font-size:14px;font-weight:bold;color:#00ffff">Off</div>
<div class="dd" style="left:709px;top:929px;width:17px;height:18px"></div>
<div style="left:714px;top:937px;width:7px;height:1px;background:#000"></div><div style="left:715px;top:938px;width:5px;height:1px;background:#000"></div><div style="left:716px;top:939px;width:3px;height:1px;background:#000"></div><div style="left:717px;top:940px;width:1px;height:1px;background:#000"></div>
<div class="t" style="left:732px;top:928px;width:20px;height:22px;line-height:22px;text-align:center;font-size:14px;font-weight:bold">M</div>
<div class="sunk" style="left:751px;top:927px;width:131px;height:22px;background:#fff"></div>
<div class="t" style="left:754px;top:929px;width:108px;height:20px;line-height:20px;text-align:left;font-size:14px">A&amp;B</div>
<div class="dd" style="left:863px;top:929px;width:17px;height:18px"></div>
<div style="left:868px;top:937px;width:7px;height:1px;background:#000"></div><div style="left:869px;top:938px;width:5px;height:1px;background:#000"></div><div style="left:870px;top:939px;width:3px;height:1px;background:#000"></div><div style="left:871px;top:940px;width:1px;height:1px;background:#000"></div>
<div class="t" style="left:885px;top:928px;width:20px;height:22px;line-height:22px;text-align:center;font-size:14px;font-weight:bold;color:#000">B</div>
<div class="sunk" style="left:905px;top:927px;width:125px;height:22px;background:#000"></div>
<div class="t" style="left:908px;top:929px;width:118px;height:20px;line-height:20px;text-align:left;font-size:14px;font-weight:bold;color:#ffff00">Auto</div>
<div style="left:8px;top:950px;width:1007px;height:1px;background:#a0a0a0"></div>
<svg style="left:19px;top:238px" width="17" height="14" viewBox="0 0 17 14" shape-rendering="crispEdges"><path d="M9 2.5Q11 0.5 13.5 1.5L14.5 3" fill="none" stroke="#000" stroke-width="1"/><path d="M13 2l2.5 1.5-2 1z" fill="#000"/><path d="M0.5 13.5V5.5L1.5 4.5H4.5L5.5 5.5H12.5V7.5" fill="#ffff00" stroke="#000" stroke-width="1"/><path d="M0.5 13.5L4.5 7.5H16.5L12.5 13.5Z" fill="#808000" stroke="#000" stroke-width="1"/></svg>
<svg style="left:42px;top:238px" width="14" height="14" viewBox="0 0 14 14" shape-rendering="crispEdges"><rect x="0.5" y="0.5" width="13" height="13" fill="#808000" stroke="#000"/><rect x="3" y="1" width="8" height="5" fill="#fff"/><rect x="2" y="8" width="10" height="5" fill="#000"/><rect x="8" y="9" width="2" height="3" fill="#fff"/></svg>
<svg style="left:19px;top:626px" width="17" height="14" viewBox="0 0 17 14" shape-rendering="crispEdges"><path d="M9 2.5Q11 0.5 13.5 1.5L14.5 3" fill="none" stroke="#000" stroke-width="1"/><path d="M13 2l2.5 1.5-2 1z" fill="#000"/><path d="M0.5 13.5V5.5L1.5 4.5H4.5L5.5 5.5H12.5V7.5" fill="#ffff00" stroke="#000" stroke-width="1"/><path d="M0.5 13.5L4.5 7.5H16.5L12.5 13.5Z" fill="#808000" stroke="#000" stroke-width="1"/></svg>
<svg style="left:42px;top:626px" width="14" height="14" viewBox="0 0 14 14" shape-rendering="crispEdges"><rect x="0.5" y="0.5" width="13" height="13" fill="#808000" stroke="#000"/><rect x="3" y="1" width="8" height="5" fill="#fff"/><rect x="2" y="8" width="10" height="5" fill="#000"/><rect x="8" y="9" width="2" height="3" fill="#fff"/></svg>
<div style="left:1015px;top:182px;width:1px;height:381px;background:#6e6e6e"></div>
<div style="left:1016px;top:182px;width:2px;height:770px;background:#f4f4f4"></div>
<div style="left:1016px;top:175px;width:2px;height:25px;background:#dcdac8"></div>
<div style="left:1015px;top:570px;width:1px;height:381px;background:#999"></div></body></html>
